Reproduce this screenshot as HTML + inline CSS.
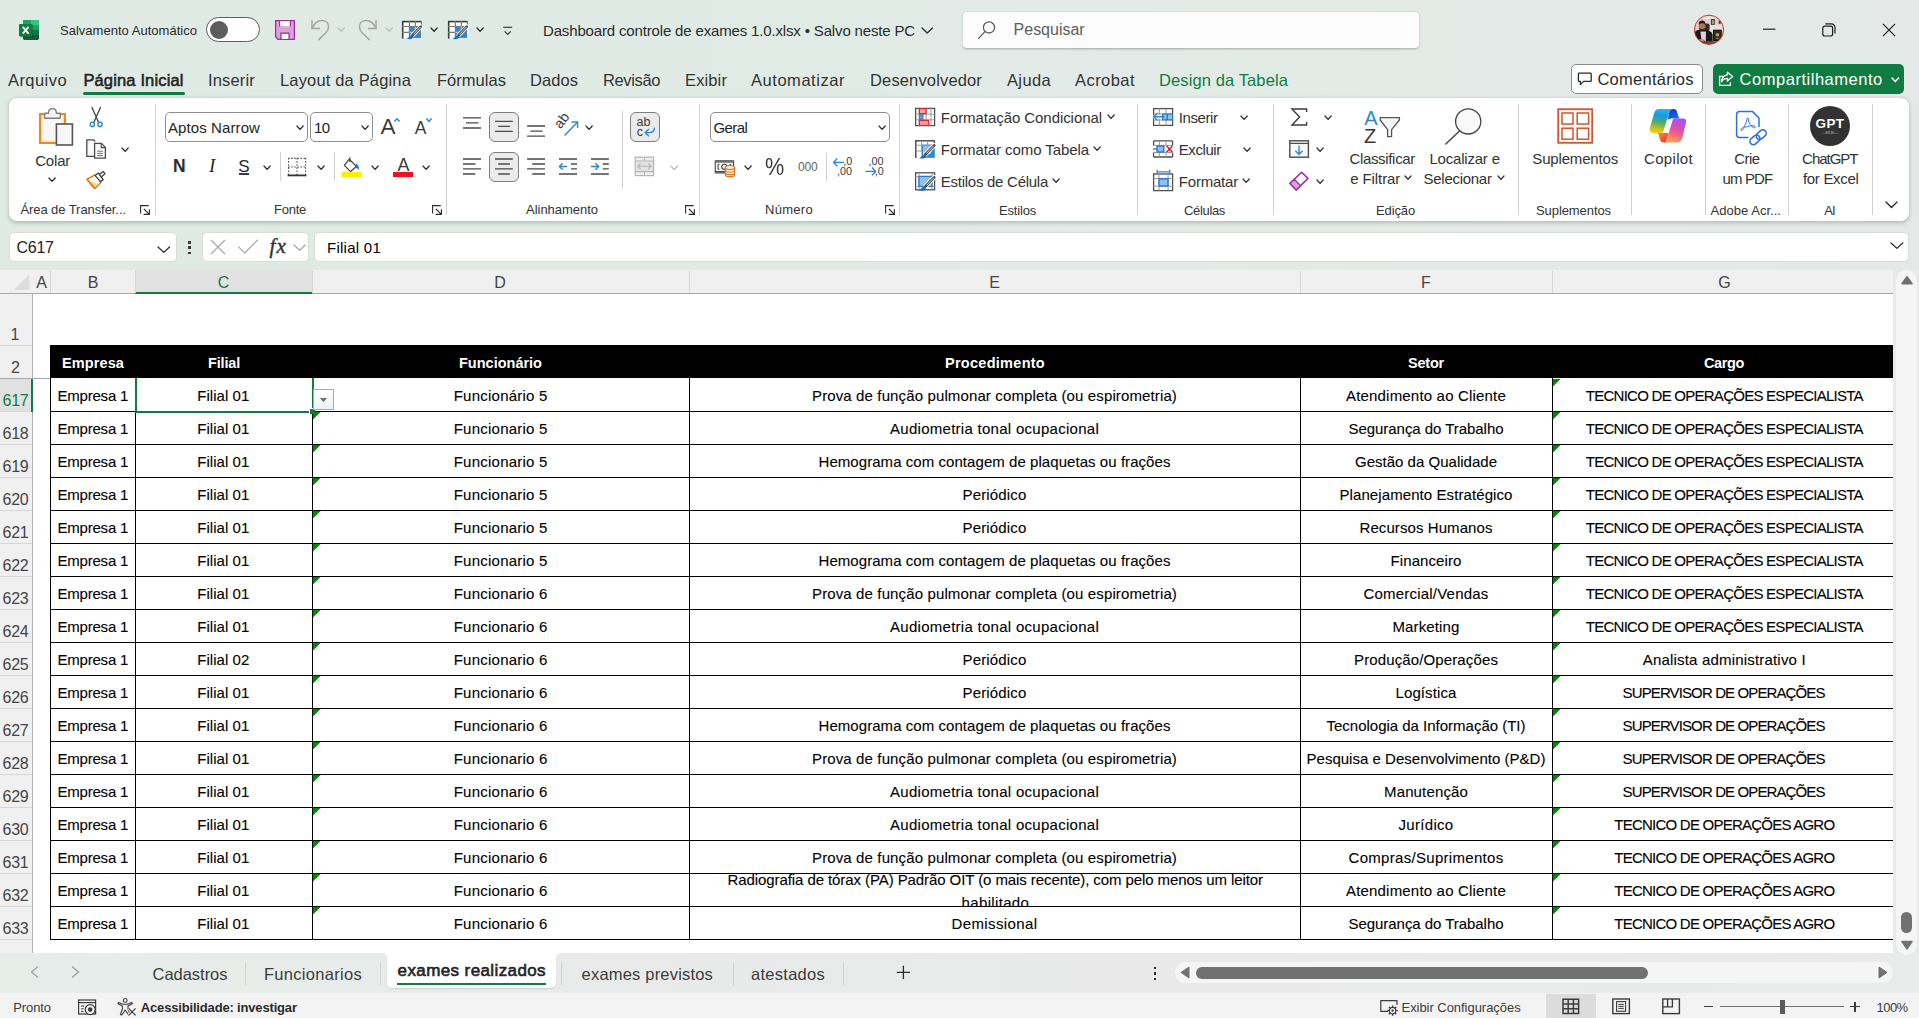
<!DOCTYPE html>
<html lang="pt-BR"><head><meta charset="utf-8"><title>Dashboard controle de exames 1.0.xlsx - Excel</title>
<style>
*{box-sizing:border-box;margin:0;padding:0}
html,body{width:1919px;height:1018px;overflow:hidden;background:#e5ebe8}
body{font-family:"Liberation Sans",sans-serif;color:#242424}
#app{position:relative;width:1919px;height:1018px;overflow:hidden;background:#e5ebe8}
.b{position:absolute;display:block}
.t{position:absolute;white-space:nowrap;display:block}

</style></head>
<body>
<div id="app">
<div class="b" style="left:0px;top:0px;width:1919px;height:270px;background:linear-gradient(90deg,#dfeae4 0%,#e1ebe6 45%,#e4e9e7 100%)"></div>
<div class="b" style="left:8.8px;top:97.8px;width:1900.3px;height:123.4px;background:#fff;border-radius:8px;box-shadow:0 1.5px 4px rgba(0,0,0,.20),0 0 1px rgba(0,0,0,.15)"></div>
<div class="b" style="left:0px;top:270px;width:1893px;height:683px;background:#fff"></div>
<div class="b" style="left:0px;top:270px;width:1893px;height:23px;background:#f0f0f0"></div>
<div class="b" style="left:0px;top:293px;width:1893px;height:1px;background:#a8a8a8"></div>
<div class="b" style="left:0px;top:294px;width:32px;height:659px;background:#f0f0f0"></div>
<div class="b" style="left:32px;top:294px;width:1px;height:659px;background:#b0b0b0"></div>
<div class="b" style="left:0px;top:953px;width:1919px;height:40px;background:linear-gradient(90deg,#e6ede9 0%,#e8ebe9 25%,#e9e9e9 60%,#e8ebea 100%)"></div>
<div class="b" style="left:0px;top:993px;width:1919px;height:25px;background:#f3f3f3"></div>
<div class="b" style="left:1893px;top:270px;width:26px;height:683px;background:#e6eae8"></div>
<span class="t" style="left:60.00px;top:22.0px;height:17px;line-height:17px;font-size:13px;color:#2b2b2b;letter-spacing:0.020px;">Salvamento Automático</span>
<span class="t" style="left:543.00px;top:21.0px;height:20px;line-height:20px;font-size:15px;color:#2b2b2b;letter-spacing:-0.156px;">Dashboard controle de exames 1.0.xlsx • Salvo neste PC</span>
<div class="b" style="left:962px;top:11px;width:458px;height:38px;background:#fbfcfb;border:1px solid #d9dddb;border-bottom-color:#b4b8b6;border-radius:5px;box-shadow:0 1px 1.5px rgba(0,0,0,.12)"></div>
<span class="t" style="left:1013.60px;top:19.0px;height:21px;line-height:21px;font-size:16px;color:#5e5e5e;letter-spacing:-0.017px;">Pesquisar</span>
<span class="t" style="left:8.00px;top:70.0px;height:21px;line-height:21px;font-size:16.5px;color:#333;letter-spacing:0.436px;">Arquivo</span>
<span class="t" style="left:208.00px;top:70.0px;height:21px;line-height:21px;font-size:16.5px;color:#333;letter-spacing:0.165px;">Inserir</span>
<span class="t" style="left:280.00px;top:70.0px;height:21px;line-height:21px;font-size:16.5px;color:#333;letter-spacing:0.160px;">Layout da Página</span>
<span class="t" style="left:437.00px;top:70.0px;height:21px;line-height:21px;font-size:16.5px;color:#333;letter-spacing:0.029px;">Fórmulas</span>
<span class="t" style="left:530.00px;top:70.0px;height:21px;line-height:21px;font-size:16.5px;color:#333;letter-spacing:0.061px;">Dados</span>
<span class="t" style="left:603.00px;top:70.0px;height:21px;line-height:21px;font-size:16.5px;color:#333;letter-spacing:-0.373px;">Revisão</span>
<span class="t" style="left:685.00px;top:70.0px;height:21px;line-height:21px;font-size:16.5px;color:#333;letter-spacing:0.124px;">Exibir</span>
<span class="t" style="left:751.00px;top:70.0px;height:21px;line-height:21px;font-size:16.5px;color:#333;letter-spacing:0.542px;">Automatizar</span>
<span class="t" style="left:870.00px;top:70.0px;height:21px;line-height:21px;font-size:16.5px;color:#333;letter-spacing:0.149px;">Desenvolvedor</span>
<span class="t" style="left:1007.00px;top:70.0px;height:21px;line-height:21px;font-size:16.5px;color:#333;letter-spacing:0.360px;">Ajuda</span>
<span class="t" style="left:1075.00px;top:70.0px;height:21px;line-height:21px;font-size:16.5px;color:#333;letter-spacing:0.448px;">Acrobat</span>
<span class="t" style="left:83.40px;top:70.0px;height:21px;line-height:21px;font-size:16.5px;color:#242424;letter-spacing:0.147px;-webkit-text-stroke:0.55px #242424;">Página Inicial</span>
<div class="b" style="left:83px;top:92px;width:102px;height:3px;background:#107c41;border-radius:2px"></div>
<span class="t" style="left:1159.00px;top:70.0px;height:21px;line-height:21px;font-size:16.5px;color:#107c41;letter-spacing:0.112px;">Design da Tabela</span>
<div class="b" style="left:1571px;top:64px;width:132px;height:30px;background:#fff;border:1px solid #8a8a8a;border-radius:5px"></div>
<span class="t" style="left:1597.40px;top:69.0px;height:21px;line-height:21px;font-size:16.5px;color:#2b2b2b;letter-spacing:0.260px;">Comentários</span>
<div class="b" style="left:1713px;top:64px;width:191px;height:30px;background:#107c41;border-radius:5px"></div>
<span class="t" style="left:1739.60px;top:69.0px;height:21px;line-height:21px;font-size:16.5px;color:#fff;letter-spacing:0.524px;">Compartilhamento</span>
<span class="t" style="left:35.20px;top:151.0px;height:20px;line-height:20px;font-size:15px;color:#333;letter-spacing:-0.169px;">Colar</span>
<span class="t" style="left:20.40px;top:201.0px;height:17px;line-height:17px;font-size:13px;color:#333;letter-spacing:-0.071px;">Área de Transfer...</span>
<span class="t" style="left:274.00px;top:201.0px;height:17px;line-height:17px;font-size:13px;color:#333;letter-spacing:-0.249px;">Fonte</span>
<span class="t" style="left:526.00px;top:201.0px;height:17px;line-height:17px;font-size:13px;color:#333;letter-spacing:-0.024px;">Alinhamento</span>
<span class="t" style="left:765.00px;top:201.0px;height:17px;line-height:17px;font-size:13px;color:#333;letter-spacing:0.294px;">Número</span>
<span class="t" style="left:940.80px;top:108.0px;height:20px;line-height:20px;font-size:15px;color:#333;letter-spacing:-0.063px;">Formatação Condicional</span>
<span class="t" style="left:940.80px;top:140.0px;height:20px;line-height:20px;font-size:15px;color:#333;letter-spacing:-0.079px;">Formatar como Tabela</span>
<span class="t" style="left:940.80px;top:172.0px;height:20px;line-height:20px;font-size:15px;color:#333;letter-spacing:-0.266px;">Estilos de Célula</span>
<span class="t" style="left:999.00px;top:202.0px;height:17px;line-height:17px;font-size:13px;color:#333;letter-spacing:-0.184px;">Estilos</span>
<span class="t" style="left:1178.80px;top:108.0px;height:20px;line-height:20px;font-size:15px;color:#333;letter-spacing:-0.411px;">Inserir</span>
<span class="t" style="left:1178.80px;top:140.0px;height:20px;line-height:20px;font-size:15px;color:#333;letter-spacing:-0.430px;">Excluir</span>
<span class="t" style="left:1178.80px;top:172.0px;height:20px;line-height:20px;font-size:15px;color:#333;letter-spacing:-0.205px;">Formatar</span>
<span class="t" style="left:1184.00px;top:202.0px;height:17px;line-height:17px;font-size:13px;color:#333;letter-spacing:-0.336px;">Células</span>
<span class="t" style="left:1349.40px;top:149.0px;height:20px;line-height:20px;font-size:15px;color:#333;letter-spacing:-0.325px;">Classificar</span>
<span class="t" style="left:1350.20px;top:169.0px;height:20px;line-height:20px;font-size:15px;color:#333;letter-spacing:-0.093px;">e Filtrar</span>
<span class="t" style="left:1429.40px;top:149.0px;height:20px;line-height:20px;font-size:15px;color:#333;letter-spacing:-0.195px;">Localizar e</span>
<span class="t" style="left:1423.60px;top:169.0px;height:20px;line-height:20px;font-size:15px;color:#333;letter-spacing:-0.288px;">Selecionar</span>
<span class="t" style="left:1376.00px;top:202.0px;height:17px;line-height:17px;font-size:13px;color:#333;letter-spacing:-0.125px;">Edição</span>
<span class="t" style="left:1532.30px;top:149.0px;height:20px;line-height:20px;font-size:15px;color:#333;letter-spacing:-0.169px;">Suplementos</span>
<span class="t" style="left:1536.00px;top:202.0px;height:17px;line-height:17px;font-size:13px;color:#333;letter-spacing:-0.080px;">Suplementos</span>
<span class="t" style="left:1644.00px;top:149.0px;height:20px;line-height:20px;font-size:15px;color:#333;letter-spacing:0.330px;">Copilot</span>
<span class="t" style="left:1734.20px;top:149.0px;height:20px;line-height:20px;font-size:15px;color:#333;letter-spacing:-0.551px;">Crie</span>
<span class="t" style="left:1722.60px;top:169.0px;height:20px;line-height:20px;font-size:15px;color:#333;letter-spacing:-0.884px;">um PDF</span>
<span class="t" style="left:1710.60px;top:202.0px;height:17px;line-height:17px;font-size:13px;color:#333;letter-spacing:0.025px;">Adobe Acr...</span>
<span class="t" style="left:1802.10px;top:149.0px;height:20px;line-height:20px;font-size:15px;color:#333;letter-spacing:-1.031px;">ChatGPT</span>
<span class="t" style="left:1802.90px;top:169.0px;height:20px;line-height:20px;font-size:15px;color:#333;letter-spacing:-0.295px;">for Excel</span>
<span class="t" style="left:1824.30px;top:202.0px;height:17px;line-height:17px;font-size:13px;color:#333;letter-spacing:-1.041px;">AI</span>
<div class="b" style="left:9px;top:232px;width:168px;height:30px;background:#fff;border:1px solid #d9dedb;border-radius:5px"></div>
<span class="t" style="left:16.60px;top:237.0px;height:21px;line-height:21px;font-size:16px;color:#242424;letter-spacing:-0.313px;">C617</span>
<div class="b" style="left:202px;top:232px;width:107px;height:30px;background:#fff;border:1px solid #d9dedb;border-radius:5px"></div>
<div class="b" style="left:314px;top:232px;width:1595px;height:30px;background:#fff;border:1px solid #d9dedb;border-radius:5px"></div>
<span class="t" style="left:327.00px;top:238.0px;height:20px;line-height:20px;font-size:15px;color:#000;letter-spacing:0.257px;">Filial 01</span>
<div class="b" style="left:135px;top:270px;width:177px;height:23px;background:#e1e1e1"></div>
<div class="b" style="left:135px;top:292px;width:177px;height:2px;background:#107c41"></div>
<div class="b" style="left:50px;top:271px;width:1px;height:22px;background:#d6d6d6"></div>
<div class="b" style="left:135px;top:271px;width:1px;height:22px;background:#d6d6d6"></div>
<div class="b" style="left:312px;top:271px;width:1px;height:22px;background:#d6d6d6"></div>
<div class="b" style="left:689px;top:271px;width:1px;height:22px;background:#d6d6d6"></div>
<div class="b" style="left:1300px;top:271px;width:1px;height:22px;background:#d6d6d6"></div>
<div class="b" style="left:1552px;top:271px;width:1px;height:22px;background:#d6d6d6"></div>
<span class="t" style="left:36.16px;top:272.0px;height:21px;line-height:21px;font-size:16px;color:#444;">A</span>
<span class="t" style="left:87.66px;top:272.0px;height:21px;line-height:21px;font-size:16px;color:#444;">B</span>
<span class="t" style="left:217.72px;top:272.0px;height:21px;line-height:21px;font-size:16px;color:#107c41;">C</span>
<span class="t" style="left:494.22px;top:272.0px;height:21px;line-height:21px;font-size:16px;color:#444;">D</span>
<span class="t" style="left:989.16px;top:272.0px;height:21px;line-height:21px;font-size:16px;color:#444;">E</span>
<span class="t" style="left:1421.11px;top:272.0px;height:21px;line-height:21px;font-size:16px;color:#444;">F</span>
<span class="t" style="left:1718.28px;top:272.0px;height:21px;line-height:21px;font-size:16px;color:#444;">G</span>
<svg class="b" style="left:12px;top:273px;" width="20" height="18" viewBox="0 0 20 18" fill="none"><path d="M17.4 1.4V17H1.8Z" fill="#dcdcdc"/></svg>
<div class="b" style="left:0px;top:345px;width:32px;height:1px;background:#d6d6d6"></div>
<span class="t" style="left:10.55px;top:324.0px;height:21px;line-height:21px;font-size:16px;color:#444;">1</span>
<span class="t" style="left:11.05px;top:357.0px;height:21px;line-height:21px;font-size:16px;color:#444;">2</span>
<div class="b" style="left:0px;top:379px;width:31px;height:32px;background:#e1e1e1"></div>
<span class="t" style="left:2.50px;top:390.0px;height:21px;line-height:21px;font-size:16px;color:#107c41;letter-spacing:-0.232px;">617</span>
<span class="t" style="left:2.50px;top:423.0px;height:21px;line-height:21px;font-size:16px;color:#444;letter-spacing:-0.232px;">618</span>
<div class="b" style="left:0px;top:411px;width:32px;height:1px;background:#d6d6d6"></div>
<span class="t" style="left:2.50px;top:456.0px;height:21px;line-height:21px;font-size:16px;color:#444;letter-spacing:-0.232px;">619</span>
<div class="b" style="left:0px;top:444px;width:32px;height:1px;background:#d6d6d6"></div>
<span class="t" style="left:2.50px;top:489.0px;height:21px;line-height:21px;font-size:16px;color:#444;letter-spacing:-0.232px;">620</span>
<div class="b" style="left:0px;top:477px;width:32px;height:1px;background:#d6d6d6"></div>
<span class="t" style="left:2.50px;top:522.0px;height:21px;line-height:21px;font-size:16px;color:#444;letter-spacing:-0.232px;">621</span>
<div class="b" style="left:0px;top:510px;width:32px;height:1px;background:#d6d6d6"></div>
<span class="t" style="left:2.50px;top:555.0px;height:21px;line-height:21px;font-size:16px;color:#444;letter-spacing:-0.232px;">622</span>
<div class="b" style="left:0px;top:543px;width:32px;height:1px;background:#d6d6d6"></div>
<span class="t" style="left:2.50px;top:588.0px;height:21px;line-height:21px;font-size:16px;color:#444;letter-spacing:-0.232px;">623</span>
<div class="b" style="left:0px;top:576px;width:32px;height:1px;background:#d6d6d6"></div>
<span class="t" style="left:2.50px;top:621.0px;height:21px;line-height:21px;font-size:16px;color:#444;letter-spacing:-0.232px;">624</span>
<div class="b" style="left:0px;top:609px;width:32px;height:1px;background:#d6d6d6"></div>
<span class="t" style="left:2.50px;top:654.0px;height:21px;line-height:21px;font-size:16px;color:#444;letter-spacing:-0.232px;">625</span>
<div class="b" style="left:0px;top:642px;width:32px;height:1px;background:#d6d6d6"></div>
<span class="t" style="left:2.50px;top:687.0px;height:21px;line-height:21px;font-size:16px;color:#444;letter-spacing:-0.232px;">626</span>
<div class="b" style="left:0px;top:675px;width:32px;height:1px;background:#d6d6d6"></div>
<span class="t" style="left:2.50px;top:720.0px;height:21px;line-height:21px;font-size:16px;color:#444;letter-spacing:-0.232px;">627</span>
<div class="b" style="left:0px;top:708px;width:32px;height:1px;background:#d6d6d6"></div>
<span class="t" style="left:2.50px;top:753.0px;height:21px;line-height:21px;font-size:16px;color:#444;letter-spacing:-0.232px;">628</span>
<div class="b" style="left:0px;top:741px;width:32px;height:1px;background:#d6d6d6"></div>
<span class="t" style="left:2.50px;top:786.0px;height:21px;line-height:21px;font-size:16px;color:#444;letter-spacing:-0.232px;">629</span>
<div class="b" style="left:0px;top:774px;width:32px;height:1px;background:#d6d6d6"></div>
<span class="t" style="left:2.50px;top:819.0px;height:21px;line-height:21px;font-size:16px;color:#444;letter-spacing:-0.232px;">630</span>
<div class="b" style="left:0px;top:807px;width:32px;height:1px;background:#d6d6d6"></div>
<span class="t" style="left:2.50px;top:852.0px;height:21px;line-height:21px;font-size:16px;color:#444;letter-spacing:-0.232px;">631</span>
<div class="b" style="left:0px;top:840px;width:32px;height:1px;background:#d6d6d6"></div>
<span class="t" style="left:2.50px;top:885.0px;height:21px;line-height:21px;font-size:16px;color:#444;letter-spacing:-0.232px;">632</span>
<div class="b" style="left:0px;top:873px;width:32px;height:1px;background:#d6d6d6"></div>
<span class="t" style="left:2.50px;top:918.0px;height:21px;line-height:21px;font-size:16px;color:#444;letter-spacing:-0.232px;">633</span>
<div class="b" style="left:0px;top:906px;width:32px;height:1px;background:#d6d6d6"></div>
<div class="b" style="left:0px;top:939px;width:32px;height:1px;background:#d6d6d6"></div>
<div class="b" style="left:0px;top:378px;width:50px;height:1px;background:#a8a8a8"></div>
<div class="b" style="left:31px;top:379px;width:2px;height:33px;background:#107c41"></div>
<div class="b" style="left:50px;top:345px;width:1843px;height:33px;background:#000"></div>
<span class="t" style="left:62.00px;top:354.0px;height:19px;line-height:19px;font-size:14.5px;color:#fff;font-weight:700;letter-spacing:0.106px;">Empresa</span>
<span class="t" style="left:208.00px;top:354.0px;height:19px;line-height:19px;font-size:14.5px;color:#fff;font-weight:700;letter-spacing:-0.173px;">Filial</span>
<span class="t" style="left:459.00px;top:354.0px;height:19px;line-height:19px;font-size:14.5px;color:#fff;font-weight:700;">Funcionário</span>
<span class="t" style="left:945.00px;top:354.0px;height:19px;line-height:19px;font-size:14.5px;color:#fff;font-weight:700;letter-spacing:0.276px;">Procedimento</span>
<span class="t" style="left:1408.00px;top:354.0px;height:19px;line-height:19px;font-size:14.5px;color:#fff;font-weight:700;letter-spacing:-0.213px;">Setor</span>
<span class="t" style="left:1704.00px;top:354.0px;height:19px;line-height:19px;font-size:14.5px;color:#fff;font-weight:700;letter-spacing:-0.379px;">Cargo</span>
<div class="b" style="left:50px;top:411px;width:1843px;height:1px;background:#000"></div>
<div class="b" style="left:50px;top:444px;width:1843px;height:1px;background:#000"></div>
<div class="b" style="left:50px;top:477px;width:1843px;height:1px;background:#000"></div>
<div class="b" style="left:50px;top:510px;width:1843px;height:1px;background:#000"></div>
<div class="b" style="left:50px;top:543px;width:1843px;height:1px;background:#000"></div>
<div class="b" style="left:50px;top:576px;width:1843px;height:1px;background:#000"></div>
<div class="b" style="left:50px;top:609px;width:1843px;height:1px;background:#000"></div>
<div class="b" style="left:50px;top:642px;width:1843px;height:1px;background:#000"></div>
<div class="b" style="left:50px;top:675px;width:1843px;height:1px;background:#000"></div>
<div class="b" style="left:50px;top:708px;width:1843px;height:1px;background:#000"></div>
<div class="b" style="left:50px;top:741px;width:1843px;height:1px;background:#000"></div>
<div class="b" style="left:50px;top:774px;width:1843px;height:1px;background:#000"></div>
<div class="b" style="left:50px;top:807px;width:1843px;height:1px;background:#000"></div>
<div class="b" style="left:50px;top:840px;width:1843px;height:1px;background:#000"></div>
<div class="b" style="left:50px;top:873px;width:1843px;height:1px;background:#000"></div>
<div class="b" style="left:50px;top:906px;width:1843px;height:1px;background:#000"></div>
<div class="b" style="left:50px;top:939px;width:1843px;height:1px;background:#000"></div>
<div class="b" style="left:50px;top:378px;width:1px;height:562px;background:#000"></div>
<div class="b" style="left:135px;top:378px;width:1px;height:562px;background:#000"></div>
<div class="b" style="left:312px;top:378px;width:1px;height:562px;background:#000"></div>
<div class="b" style="left:689px;top:378px;width:1px;height:562px;background:#000"></div>
<div class="b" style="left:1300px;top:378px;width:1px;height:562px;background:#000"></div>
<div class="b" style="left:1552px;top:378px;width:1px;height:562px;background:#000"></div>
<span class="t" style="left:57.50px;top:386.0px;height:20px;line-height:20px;font-size:15px;color:#000;letter-spacing:-0.215px;-webkit-text-stroke:0.1px #000;">Empresa 1</span>
<span class="t" style="left:197.30px;top:386.0px;height:20px;line-height:20px;font-size:15px;color:#000;letter-spacing:0.035px;-webkit-text-stroke:0.1px #000;">Filial 01</span>
<span class="t" style="left:453.70px;top:386.0px;height:20px;line-height:20px;font-size:15px;color:#000;letter-spacing:0.239px;-webkit-text-stroke:0.1px #000;">Funcionário 5</span>
<span class="t" style="left:812.00px;top:386.0px;height:20px;line-height:20px;font-size:15px;color:#000;letter-spacing:0.127px;-webkit-text-stroke:0.1px #000;">Prova de função pulmonar completa (ou espirometria)</span>
<span class="t" style="left:1346.00px;top:386.0px;height:20px;line-height:20px;font-size:15px;color:#000;letter-spacing:0.185px;-webkit-text-stroke:0.1px #000;">Atendimento ao Cliente</span>
<span class="t" style="left:1585.80px;top:386.0px;height:20px;line-height:20px;font-size:15px;color:#000;letter-spacing:-0.741px;-webkit-text-stroke:0.1px #000;">TECNICO DE OPERAÇÕES ESPECIALISTA</span>
<span class="t" style="left:57.50px;top:419.0px;height:20px;line-height:20px;font-size:15px;color:#000;letter-spacing:-0.215px;-webkit-text-stroke:0.1px #000;">Empresa 1</span>
<span class="t" style="left:197.30px;top:419.0px;height:20px;line-height:20px;font-size:15px;color:#000;letter-spacing:0.035px;-webkit-text-stroke:0.1px #000;">Filial 01</span>
<span class="t" style="left:453.70px;top:419.0px;height:20px;line-height:20px;font-size:15px;color:#000;letter-spacing:0.239px;-webkit-text-stroke:0.1px #000;">Funcionario 5</span>
<span class="t" style="left:890.00px;top:419.0px;height:20px;line-height:20px;font-size:15px;color:#000;letter-spacing:0.277px;-webkit-text-stroke:0.1px #000;">Audiometria tonal ocupacional</span>
<span class="t" style="left:1348.50px;top:419.0px;height:20px;line-height:20px;font-size:15px;color:#000;letter-spacing:-0.045px;-webkit-text-stroke:0.1px #000;">Segurança do Trabalho</span>
<span class="t" style="left:1585.80px;top:419.0px;height:20px;line-height:20px;font-size:15px;color:#000;letter-spacing:-0.741px;-webkit-text-stroke:0.1px #000;">TECNICO DE OPERAÇÕES ESPECIALISTA</span>
<span class="t" style="left:57.50px;top:452.0px;height:20px;line-height:20px;font-size:15px;color:#000;letter-spacing:-0.215px;-webkit-text-stroke:0.1px #000;">Empresa 1</span>
<span class="t" style="left:197.30px;top:452.0px;height:20px;line-height:20px;font-size:15px;color:#000;letter-spacing:0.035px;-webkit-text-stroke:0.1px #000;">Filial 01</span>
<span class="t" style="left:453.70px;top:452.0px;height:20px;line-height:20px;font-size:15px;color:#000;letter-spacing:0.239px;-webkit-text-stroke:0.1px #000;">Funcionario 5</span>
<span class="t" style="left:818.50px;top:452.0px;height:20px;line-height:20px;font-size:15px;color:#000;letter-spacing:0.057px;-webkit-text-stroke:0.1px #000;">Hemograma com contagem de plaquetas ou frações</span>
<span class="t" style="left:1355.00px;top:452.0px;height:20px;line-height:20px;font-size:15px;color:#000;letter-spacing:0.012px;-webkit-text-stroke:0.1px #000;">Gestão da Qualidade</span>
<span class="t" style="left:1585.80px;top:452.0px;height:20px;line-height:20px;font-size:15px;color:#000;letter-spacing:-0.741px;-webkit-text-stroke:0.1px #000;">TECNICO DE OPERAÇÕES ESPECIALISTA</span>
<span class="t" style="left:57.50px;top:485.0px;height:20px;line-height:20px;font-size:15px;color:#000;letter-spacing:-0.215px;-webkit-text-stroke:0.1px #000;">Empresa 1</span>
<span class="t" style="left:197.30px;top:485.0px;height:20px;line-height:20px;font-size:15px;color:#000;letter-spacing:0.035px;-webkit-text-stroke:0.1px #000;">Filial 01</span>
<span class="t" style="left:453.70px;top:485.0px;height:20px;line-height:20px;font-size:15px;color:#000;letter-spacing:0.239px;-webkit-text-stroke:0.1px #000;">Funcionario 5</span>
<span class="t" style="left:962.50px;top:485.0px;height:20px;line-height:20px;font-size:15px;color:#000;letter-spacing:0.163px;-webkit-text-stroke:0.1px #000;">Periódico</span>
<span class="t" style="left:1339.50px;top:485.0px;height:20px;line-height:20px;font-size:15px;color:#000;letter-spacing:0.086px;-webkit-text-stroke:0.1px #000;">Planejamento Estratégico</span>
<span class="t" style="left:1585.80px;top:485.0px;height:20px;line-height:20px;font-size:15px;color:#000;letter-spacing:-0.741px;-webkit-text-stroke:0.1px #000;">TECNICO DE OPERAÇÕES ESPECIALISTA</span>
<span class="t" style="left:57.50px;top:518.0px;height:20px;line-height:20px;font-size:15px;color:#000;letter-spacing:-0.215px;-webkit-text-stroke:0.1px #000;">Empresa 1</span>
<span class="t" style="left:197.30px;top:518.0px;height:20px;line-height:20px;font-size:15px;color:#000;letter-spacing:0.035px;-webkit-text-stroke:0.1px #000;">Filial 01</span>
<span class="t" style="left:453.70px;top:518.0px;height:20px;line-height:20px;font-size:15px;color:#000;letter-spacing:0.239px;-webkit-text-stroke:0.1px #000;">Funcionario 5</span>
<span class="t" style="left:962.50px;top:518.0px;height:20px;line-height:20px;font-size:15px;color:#000;letter-spacing:0.163px;-webkit-text-stroke:0.1px #000;">Periódico</span>
<span class="t" style="left:1359.50px;top:518.0px;height:20px;line-height:20px;font-size:15px;color:#000;letter-spacing:0.080px;-webkit-text-stroke:0.1px #000;">Recursos Humanos</span>
<span class="t" style="left:1585.80px;top:518.0px;height:20px;line-height:20px;font-size:15px;color:#000;letter-spacing:-0.741px;-webkit-text-stroke:0.1px #000;">TECNICO DE OPERAÇÕES ESPECIALISTA</span>
<span class="t" style="left:57.50px;top:551.0px;height:20px;line-height:20px;font-size:15px;color:#000;letter-spacing:-0.215px;-webkit-text-stroke:0.1px #000;">Empresa 1</span>
<span class="t" style="left:197.30px;top:551.0px;height:20px;line-height:20px;font-size:15px;color:#000;letter-spacing:0.035px;-webkit-text-stroke:0.1px #000;">Filial 01</span>
<span class="t" style="left:453.70px;top:551.0px;height:20px;line-height:20px;font-size:15px;color:#000;letter-spacing:0.239px;-webkit-text-stroke:0.1px #000;">Funcionario 5</span>
<span class="t" style="left:818.50px;top:551.0px;height:20px;line-height:20px;font-size:15px;color:#000;letter-spacing:0.057px;-webkit-text-stroke:0.1px #000;">Hemograma com contagem de plaquetas ou frações</span>
<span class="t" style="left:1390.50px;top:551.0px;height:20px;line-height:20px;font-size:15px;color:#000;letter-spacing:0.097px;-webkit-text-stroke:0.1px #000;">Financeiro</span>
<span class="t" style="left:1585.80px;top:551.0px;height:20px;line-height:20px;font-size:15px;color:#000;letter-spacing:-0.741px;-webkit-text-stroke:0.1px #000;">TECNICO DE OPERAÇÕES ESPECIALISTA</span>
<span class="t" style="left:57.50px;top:584.0px;height:20px;line-height:20px;font-size:15px;color:#000;letter-spacing:-0.215px;-webkit-text-stroke:0.1px #000;">Empresa 1</span>
<span class="t" style="left:197.30px;top:584.0px;height:20px;line-height:20px;font-size:15px;color:#000;letter-spacing:0.035px;-webkit-text-stroke:0.1px #000;">Filial 01</span>
<span class="t" style="left:453.70px;top:584.0px;height:20px;line-height:20px;font-size:15px;color:#000;letter-spacing:0.239px;-webkit-text-stroke:0.1px #000;">Funcionario 6</span>
<span class="t" style="left:812.00px;top:584.0px;height:20px;line-height:20px;font-size:15px;color:#000;letter-spacing:0.127px;-webkit-text-stroke:0.1px #000;">Prova de função pulmonar completa (ou espirometria)</span>
<span class="t" style="left:1363.50px;top:584.0px;height:20px;line-height:20px;font-size:15px;color:#000;letter-spacing:0.204px;-webkit-text-stroke:0.1px #000;">Comercial/Vendas</span>
<span class="t" style="left:1585.80px;top:584.0px;height:20px;line-height:20px;font-size:15px;color:#000;letter-spacing:-0.741px;-webkit-text-stroke:0.1px #000;">TECNICO DE OPERAÇÕES ESPECIALISTA</span>
<span class="t" style="left:57.50px;top:617.0px;height:20px;line-height:20px;font-size:15px;color:#000;letter-spacing:-0.215px;-webkit-text-stroke:0.1px #000;">Empresa 1</span>
<span class="t" style="left:197.30px;top:617.0px;height:20px;line-height:20px;font-size:15px;color:#000;letter-spacing:0.035px;-webkit-text-stroke:0.1px #000;">Filial 01</span>
<span class="t" style="left:453.70px;top:617.0px;height:20px;line-height:20px;font-size:15px;color:#000;letter-spacing:0.239px;-webkit-text-stroke:0.1px #000;">Funcionario 6</span>
<span class="t" style="left:890.00px;top:617.0px;height:20px;line-height:20px;font-size:15px;color:#000;letter-spacing:0.277px;-webkit-text-stroke:0.1px #000;">Audiometria tonal ocupacional</span>
<span class="t" style="left:1392.50px;top:617.0px;height:20px;line-height:20px;font-size:15px;color:#000;letter-spacing:0.127px;-webkit-text-stroke:0.1px #000;">Marketing</span>
<span class="t" style="left:1585.80px;top:617.0px;height:20px;line-height:20px;font-size:15px;color:#000;letter-spacing:-0.741px;-webkit-text-stroke:0.1px #000;">TECNICO DE OPERAÇÕES ESPECIALISTA</span>
<span class="t" style="left:57.50px;top:650.0px;height:20px;line-height:20px;font-size:15px;color:#000;letter-spacing:-0.215px;-webkit-text-stroke:0.1px #000;">Empresa 1</span>
<span class="t" style="left:197.30px;top:650.0px;height:20px;line-height:20px;font-size:15px;color:#000;letter-spacing:0.035px;-webkit-text-stroke:0.1px #000;">Filial 02</span>
<span class="t" style="left:453.70px;top:650.0px;height:20px;line-height:20px;font-size:15px;color:#000;letter-spacing:0.239px;-webkit-text-stroke:0.1px #000;">Funcionario 6</span>
<span class="t" style="left:962.50px;top:650.0px;height:20px;line-height:20px;font-size:15px;color:#000;letter-spacing:0.163px;-webkit-text-stroke:0.1px #000;">Periódico</span>
<span class="t" style="left:1354.00px;top:650.0px;height:20px;line-height:20px;font-size:15px;color:#000;letter-spacing:0.125px;-webkit-text-stroke:0.1px #000;">Produção/Operações</span>
<span class="t" style="left:1642.80px;top:650.0px;height:20px;line-height:20px;font-size:15px;color:#000;letter-spacing:0.184px;-webkit-text-stroke:0.1px #000;">Analista administrativo I</span>
<span class="t" style="left:57.50px;top:683.0px;height:20px;line-height:20px;font-size:15px;color:#000;letter-spacing:-0.215px;-webkit-text-stroke:0.1px #000;">Empresa 1</span>
<span class="t" style="left:197.30px;top:683.0px;height:20px;line-height:20px;font-size:15px;color:#000;letter-spacing:0.035px;-webkit-text-stroke:0.1px #000;">Filial 01</span>
<span class="t" style="left:453.70px;top:683.0px;height:20px;line-height:20px;font-size:15px;color:#000;letter-spacing:0.239px;-webkit-text-stroke:0.1px #000;">Funcionario 6</span>
<span class="t" style="left:962.50px;top:683.0px;height:20px;line-height:20px;font-size:15px;color:#000;letter-spacing:0.163px;-webkit-text-stroke:0.1px #000;">Periódico</span>
<span class="t" style="left:1395.50px;top:683.0px;height:20px;line-height:20px;font-size:15px;color:#000;letter-spacing:0.107px;-webkit-text-stroke:0.1px #000;">Logística</span>
<span class="t" style="left:1622.60px;top:683.0px;height:20px;line-height:20px;font-size:15px;color:#000;letter-spacing:-0.882px;-webkit-text-stroke:0.1px #000;">SUPERVISOR DE OPERAÇÕES</span>
<span class="t" style="left:57.50px;top:716.0px;height:20px;line-height:20px;font-size:15px;color:#000;letter-spacing:-0.215px;-webkit-text-stroke:0.1px #000;">Empresa 1</span>
<span class="t" style="left:197.30px;top:716.0px;height:20px;line-height:20px;font-size:15px;color:#000;letter-spacing:0.035px;-webkit-text-stroke:0.1px #000;">Filial 01</span>
<span class="t" style="left:453.70px;top:716.0px;height:20px;line-height:20px;font-size:15px;color:#000;letter-spacing:0.239px;-webkit-text-stroke:0.1px #000;">Funcionario 6</span>
<span class="t" style="left:818.50px;top:716.0px;height:20px;line-height:20px;font-size:15px;color:#000;letter-spacing:0.057px;-webkit-text-stroke:0.1px #000;">Hemograma com contagem de plaquetas ou frações</span>
<span class="t" style="left:1326.50px;top:716.0px;height:20px;line-height:20px;font-size:15px;color:#000;letter-spacing:-0.009px;-webkit-text-stroke:0.1px #000;">Tecnologia da Informação (TI)</span>
<span class="t" style="left:1622.60px;top:716.0px;height:20px;line-height:20px;font-size:15px;color:#000;letter-spacing:-0.882px;-webkit-text-stroke:0.1px #000;">SUPERVISOR DE OPERAÇÕES</span>
<span class="t" style="left:57.50px;top:749.0px;height:20px;line-height:20px;font-size:15px;color:#000;letter-spacing:-0.215px;-webkit-text-stroke:0.1px #000;">Empresa 1</span>
<span class="t" style="left:197.30px;top:749.0px;height:20px;line-height:20px;font-size:15px;color:#000;letter-spacing:0.035px;-webkit-text-stroke:0.1px #000;">Filial 01</span>
<span class="t" style="left:453.70px;top:749.0px;height:20px;line-height:20px;font-size:15px;color:#000;letter-spacing:0.239px;-webkit-text-stroke:0.1px #000;">Funcionario 6</span>
<span class="t" style="left:812.00px;top:749.0px;height:20px;line-height:20px;font-size:15px;color:#000;letter-spacing:0.127px;-webkit-text-stroke:0.1px #000;">Prova de função pulmonar completa (ou espirometria)</span>
<span class="t" style="left:1306.50px;top:749.0px;height:20px;line-height:20px;font-size:15px;color:#000;letter-spacing:0.017px;-webkit-text-stroke:0.1px #000;">Pesquisa e Desenvolvimento (P&amp;D)</span>
<span class="t" style="left:1622.60px;top:749.0px;height:20px;line-height:20px;font-size:15px;color:#000;letter-spacing:-0.882px;-webkit-text-stroke:0.1px #000;">SUPERVISOR DE OPERAÇÕES</span>
<span class="t" style="left:57.50px;top:782.0px;height:20px;line-height:20px;font-size:15px;color:#000;letter-spacing:-0.215px;-webkit-text-stroke:0.1px #000;">Empresa 1</span>
<span class="t" style="left:197.30px;top:782.0px;height:20px;line-height:20px;font-size:15px;color:#000;letter-spacing:0.035px;-webkit-text-stroke:0.1px #000;">Filial 01</span>
<span class="t" style="left:453.70px;top:782.0px;height:20px;line-height:20px;font-size:15px;color:#000;letter-spacing:0.239px;-webkit-text-stroke:0.1px #000;">Funcionario 6</span>
<span class="t" style="left:890.00px;top:782.0px;height:20px;line-height:20px;font-size:15px;color:#000;letter-spacing:0.277px;-webkit-text-stroke:0.1px #000;">Audiometria tonal ocupacional</span>
<span class="t" style="left:1384.00px;top:782.0px;height:20px;line-height:20px;font-size:15px;color:#000;letter-spacing:0.144px;-webkit-text-stroke:0.1px #000;">Manutenção</span>
<span class="t" style="left:1622.60px;top:782.0px;height:20px;line-height:20px;font-size:15px;color:#000;letter-spacing:-0.882px;-webkit-text-stroke:0.1px #000;">SUPERVISOR DE OPERAÇÕES</span>
<span class="t" style="left:57.50px;top:815.0px;height:20px;line-height:20px;font-size:15px;color:#000;letter-spacing:-0.215px;-webkit-text-stroke:0.1px #000;">Empresa 1</span>
<span class="t" style="left:197.30px;top:815.0px;height:20px;line-height:20px;font-size:15px;color:#000;letter-spacing:0.035px;-webkit-text-stroke:0.1px #000;">Filial 01</span>
<span class="t" style="left:453.70px;top:815.0px;height:20px;line-height:20px;font-size:15px;color:#000;letter-spacing:0.239px;-webkit-text-stroke:0.1px #000;">Funcionario 6</span>
<span class="t" style="left:890.00px;top:815.0px;height:20px;line-height:20px;font-size:15px;color:#000;letter-spacing:0.277px;-webkit-text-stroke:0.1px #000;">Audiometria tonal ocupacional</span>
<span class="t" style="left:1398.50px;top:815.0px;height:20px;line-height:20px;font-size:15px;color:#000;letter-spacing:0.310px;-webkit-text-stroke:0.1px #000;">Jurídico</span>
<span class="t" style="left:1614.30px;top:815.0px;height:20px;line-height:20px;font-size:15px;color:#000;letter-spacing:-0.768px;-webkit-text-stroke:0.1px #000;">TECNICO DE OPERAÇÕES AGRO</span>
<span class="t" style="left:57.50px;top:848.0px;height:20px;line-height:20px;font-size:15px;color:#000;letter-spacing:-0.215px;-webkit-text-stroke:0.1px #000;">Empresa 1</span>
<span class="t" style="left:197.30px;top:848.0px;height:20px;line-height:20px;font-size:15px;color:#000;letter-spacing:0.035px;-webkit-text-stroke:0.1px #000;">Filial 01</span>
<span class="t" style="left:453.70px;top:848.0px;height:20px;line-height:20px;font-size:15px;color:#000;letter-spacing:0.239px;-webkit-text-stroke:0.1px #000;">Funcionario 6</span>
<span class="t" style="left:812.00px;top:848.0px;height:20px;line-height:20px;font-size:15px;color:#000;letter-spacing:0.127px;-webkit-text-stroke:0.1px #000;">Prova de função pulmonar completa (ou espirometria)</span>
<span class="t" style="left:1348.50px;top:848.0px;height:20px;line-height:20px;font-size:15px;color:#000;letter-spacing:0.304px;-webkit-text-stroke:0.1px #000;">Compras/Suprimentos</span>
<span class="t" style="left:1614.30px;top:848.0px;height:20px;line-height:20px;font-size:15px;color:#000;letter-spacing:-0.768px;-webkit-text-stroke:0.1px #000;">TECNICO DE OPERAÇÕES AGRO</span>
<span class="t" style="left:57.50px;top:881.0px;height:20px;line-height:20px;font-size:15px;color:#000;letter-spacing:-0.215px;-webkit-text-stroke:0.1px #000;">Empresa 1</span>
<span class="t" style="left:197.30px;top:881.0px;height:20px;line-height:20px;font-size:15px;color:#000;letter-spacing:0.035px;-webkit-text-stroke:0.1px #000;">Filial 01</span>
<span class="t" style="left:453.70px;top:881.0px;height:20px;line-height:20px;font-size:15px;color:#000;letter-spacing:0.239px;-webkit-text-stroke:0.1px #000;">Funcionario 6</span>
<span class="t" style="left:1346.00px;top:881.0px;height:20px;line-height:20px;font-size:15px;color:#000;letter-spacing:0.185px;-webkit-text-stroke:0.1px #000;">Atendimento ao Cliente</span>
<span class="t" style="left:1614.30px;top:881.0px;height:20px;line-height:20px;font-size:15px;color:#000;letter-spacing:-0.768px;-webkit-text-stroke:0.1px #000;">TECNICO DE OPERAÇÕES AGRO</span>
<span class="t" style="left:57.50px;top:914.0px;height:20px;line-height:20px;font-size:15px;color:#000;letter-spacing:-0.215px;-webkit-text-stroke:0.1px #000;">Empresa 1</span>
<span class="t" style="left:197.30px;top:914.0px;height:20px;line-height:20px;font-size:15px;color:#000;letter-spacing:0.035px;-webkit-text-stroke:0.1px #000;">Filial 01</span>
<span class="t" style="left:453.70px;top:914.0px;height:20px;line-height:20px;font-size:15px;color:#000;letter-spacing:0.239px;-webkit-text-stroke:0.1px #000;">Funcionario 6</span>
<span class="t" style="left:951.50px;top:914.0px;height:20px;line-height:20px;font-size:15px;color:#000;letter-spacing:0.391px;-webkit-text-stroke:0.1px #000;">Demissional</span>
<span class="t" style="left:1348.50px;top:914.0px;height:20px;line-height:20px;font-size:15px;color:#000;letter-spacing:-0.045px;-webkit-text-stroke:0.1px #000;">Segurança do Trabalho</span>
<span class="t" style="left:1614.30px;top:914.0px;height:20px;line-height:20px;font-size:15px;color:#000;letter-spacing:-0.768px;-webkit-text-stroke:0.1px #000;">TECNICO DE OPERAÇÕES AGRO</span>
<div class="b" style="left:690px;top:874px;width:610px;height:32px;overflow:hidden">
<span class="t" style="left:37.60px;top:-4.0px;height:20px;line-height:20px;font-size:15px;color:#000;letter-spacing:-0.086px;-webkit-text-stroke:0.1px #000;">Radiografia de tórax (PA) Padrão OIT (o mais recente), com pelo menos um leitor</span>
<span class="t" style="left:271.60px;top:19.0px;height:20px;line-height:20px;font-size:15px;color:#000;letter-spacing:0.338px;-webkit-text-stroke:0.1px #000;">habilitado</span>
</div>
<svg class="b" style="left:1553px;top:379px;" width="8" height="8" viewBox="0 0 8 8" fill="none"><path d="M0 0H7.6L0 7.6Z" fill="#008a00"/></svg>
<svg class="b" style="left:313px;top:412px;" width="8" height="8" viewBox="0 0 8 8" fill="none"><path d="M0 0H7.6L0 7.6Z" fill="#008a00"/></svg>
<svg class="b" style="left:1553px;top:412px;" width="8" height="8" viewBox="0 0 8 8" fill="none"><path d="M0 0H7.6L0 7.6Z" fill="#008a00"/></svg>
<svg class="b" style="left:313px;top:445px;" width="8" height="8" viewBox="0 0 8 8" fill="none"><path d="M0 0H7.6L0 7.6Z" fill="#008a00"/></svg>
<svg class="b" style="left:1553px;top:445px;" width="8" height="8" viewBox="0 0 8 8" fill="none"><path d="M0 0H7.6L0 7.6Z" fill="#008a00"/></svg>
<svg class="b" style="left:313px;top:478px;" width="8" height="8" viewBox="0 0 8 8" fill="none"><path d="M0 0H7.6L0 7.6Z" fill="#008a00"/></svg>
<svg class="b" style="left:1553px;top:478px;" width="8" height="8" viewBox="0 0 8 8" fill="none"><path d="M0 0H7.6L0 7.6Z" fill="#008a00"/></svg>
<svg class="b" style="left:313px;top:511px;" width="8" height="8" viewBox="0 0 8 8" fill="none"><path d="M0 0H7.6L0 7.6Z" fill="#008a00"/></svg>
<svg class="b" style="left:1553px;top:511px;" width="8" height="8" viewBox="0 0 8 8" fill="none"><path d="M0 0H7.6L0 7.6Z" fill="#008a00"/></svg>
<svg class="b" style="left:313px;top:544px;" width="8" height="8" viewBox="0 0 8 8" fill="none"><path d="M0 0H7.6L0 7.6Z" fill="#008a00"/></svg>
<svg class="b" style="left:1553px;top:544px;" width="8" height="8" viewBox="0 0 8 8" fill="none"><path d="M0 0H7.6L0 7.6Z" fill="#008a00"/></svg>
<svg class="b" style="left:313px;top:577px;" width="8" height="8" viewBox="0 0 8 8" fill="none"><path d="M0 0H7.6L0 7.6Z" fill="#008a00"/></svg>
<svg class="b" style="left:1553px;top:577px;" width="8" height="8" viewBox="0 0 8 8" fill="none"><path d="M0 0H7.6L0 7.6Z" fill="#008a00"/></svg>
<svg class="b" style="left:313px;top:610px;" width="8" height="8" viewBox="0 0 8 8" fill="none"><path d="M0 0H7.6L0 7.6Z" fill="#008a00"/></svg>
<svg class="b" style="left:1553px;top:610px;" width="8" height="8" viewBox="0 0 8 8" fill="none"><path d="M0 0H7.6L0 7.6Z" fill="#008a00"/></svg>
<svg class="b" style="left:313px;top:643px;" width="8" height="8" viewBox="0 0 8 8" fill="none"><path d="M0 0H7.6L0 7.6Z" fill="#008a00"/></svg>
<svg class="b" style="left:1553px;top:643px;" width="8" height="8" viewBox="0 0 8 8" fill="none"><path d="M0 0H7.6L0 7.6Z" fill="#008a00"/></svg>
<svg class="b" style="left:313px;top:676px;" width="8" height="8" viewBox="0 0 8 8" fill="none"><path d="M0 0H7.6L0 7.6Z" fill="#008a00"/></svg>
<svg class="b" style="left:1553px;top:676px;" width="8" height="8" viewBox="0 0 8 8" fill="none"><path d="M0 0H7.6L0 7.6Z" fill="#008a00"/></svg>
<svg class="b" style="left:313px;top:709px;" width="8" height="8" viewBox="0 0 8 8" fill="none"><path d="M0 0H7.6L0 7.6Z" fill="#008a00"/></svg>
<svg class="b" style="left:1553px;top:709px;" width="8" height="8" viewBox="0 0 8 8" fill="none"><path d="M0 0H7.6L0 7.6Z" fill="#008a00"/></svg>
<svg class="b" style="left:313px;top:742px;" width="8" height="8" viewBox="0 0 8 8" fill="none"><path d="M0 0H7.6L0 7.6Z" fill="#008a00"/></svg>
<svg class="b" style="left:1553px;top:742px;" width="8" height="8" viewBox="0 0 8 8" fill="none"><path d="M0 0H7.6L0 7.6Z" fill="#008a00"/></svg>
<svg class="b" style="left:313px;top:775px;" width="8" height="8" viewBox="0 0 8 8" fill="none"><path d="M0 0H7.6L0 7.6Z" fill="#008a00"/></svg>
<svg class="b" style="left:1553px;top:775px;" width="8" height="8" viewBox="0 0 8 8" fill="none"><path d="M0 0H7.6L0 7.6Z" fill="#008a00"/></svg>
<svg class="b" style="left:313px;top:808px;" width="8" height="8" viewBox="0 0 8 8" fill="none"><path d="M0 0H7.6L0 7.6Z" fill="#008a00"/></svg>
<svg class="b" style="left:1553px;top:808px;" width="8" height="8" viewBox="0 0 8 8" fill="none"><path d="M0 0H7.6L0 7.6Z" fill="#008a00"/></svg>
<svg class="b" style="left:313px;top:841px;" width="8" height="8" viewBox="0 0 8 8" fill="none"><path d="M0 0H7.6L0 7.6Z" fill="#008a00"/></svg>
<svg class="b" style="left:1553px;top:841px;" width="8" height="8" viewBox="0 0 8 8" fill="none"><path d="M0 0H7.6L0 7.6Z" fill="#008a00"/></svg>
<svg class="b" style="left:313px;top:874px;" width="8" height="8" viewBox="0 0 8 8" fill="none"><path d="M0 0H7.6L0 7.6Z" fill="#008a00"/></svg>
<svg class="b" style="left:1553px;top:874px;" width="8" height="8" viewBox="0 0 8 8" fill="none"><path d="M0 0H7.6L0 7.6Z" fill="#008a00"/></svg>
<svg class="b" style="left:313px;top:907px;" width="8" height="8" viewBox="0 0 8 8" fill="none"><path d="M0 0H7.6L0 7.6Z" fill="#008a00"/></svg>
<svg class="b" style="left:1553px;top:907px;" width="8" height="8" viewBox="0 0 8 8" fill="none"><path d="M0 0H7.6L0 7.6Z" fill="#008a00"/></svg>
<div class="b" style="left:135px;top:378px;width:179px;height:35px;border:2px solid #107c41;border-top:0"></div>
<div class="b" style="left:309px;top:408px;width:6px;height:6px;background:#1e7145;border:1px solid #fff;border-right:0;border-bottom:0"></div>
<div class="b" style="left:313px;top:389px;width:21px;height:21px;background:linear-gradient(#fff,#eef0f6);border:1px solid #a4a9b4"></div>
<svg class="b" style="left:319px;top:397px;" width="9" height="6" viewBox="0 0 9 6" fill="none"><path d="M0.8 1H8.2L4.5 5Z" fill="#6e6e6e"/></svg>
<div class="b" style="left:387px;top:953px;width:169px;height:35px;background:#fff;border-radius:0 0 5px 5px;box-shadow:0 1px 1.5px rgba(0,0,0,.10)"></div>
<svg class="b" style="left:382px;top:953px;" width="5" height="5" viewBox="0 0 5 5" fill="none"><path d="M0 0H5V5A5 5 0 0 0 0 0Z" fill="#fff"/></svg>
<svg class="b" style="left:556px;top:953px;" width="5" height="5" viewBox="0 0 5 5" fill="none"><path d="M5 0H0V5A5 5 0 0 1 5 0Z" fill="#fff"/></svg>
<span class="t" style="left:152.50px;top:964.0px;height:21px;line-height:21px;font-size:16.5px;color:#3b3b3b;letter-spacing:-0.022px;">Cadastros</span>
<span class="t" style="left:264.00px;top:964.0px;height:21px;line-height:21px;font-size:16.5px;color:#3b3b3b;letter-spacing:0.295px;">Funcionarios</span>
<span class="t" style="left:581.60px;top:964.0px;height:21px;line-height:21px;font-size:16.5px;color:#3b3b3b;letter-spacing:0.189px;">exames previstos</span>
<span class="t" style="left:751.00px;top:964.0px;height:21px;line-height:21px;font-size:16.5px;color:#3b3b3b;letter-spacing:0.272px;">atestados</span>
<span class="t" style="left:397.60px;top:960.0px;height:22px;line-height:22px;font-size:17px;color:#242424;letter-spacing:0.392px;-webkit-text-stroke:0.6px #242424;">exames realizados</span>
<div class="b" style="left:397px;top:983px;width:149px;height:2px;background:#107c41"></div>
<div class="b" style="left:245px;top:961.5px;width:1px;height:23px;background:#cfd3d1"></div>
<div class="b" style="left:380px;top:961.5px;width:1px;height:23px;background:#cfd3d1"></div>
<div class="b" style="left:561px;top:961.5px;width:1px;height:23px;background:#cfd3d1"></div>
<div class="b" style="left:733px;top:961.5px;width:1px;height:23px;background:#cfd3d1"></div>
<div class="b" style="left:843px;top:961.5px;width:1px;height:23px;background:#cfd3d1"></div>
<span class="t" style="left:13.30px;top:999.0px;height:17px;line-height:17px;font-size:13px;color:#3b3b3b;letter-spacing:-0.100px;">Pronto</span>
<span class="t" style="left:140.80px;top:999.0px;height:17px;line-height:17px;font-size:13px;color:#2b2b2b;font-weight:700;letter-spacing:-0.169px;">Acessibilidade: investigar</span>
<span class="t" style="left:1401.50px;top:999.0px;height:17px;line-height:17px;font-size:13px;color:#3b3b3b;letter-spacing:-0.042px;">Exibir Configurações</span>
<span class="t" style="left:1876.50px;top:999.0px;height:17px;line-height:17px;font-size:13px;color:#3b3b3b;letter-spacing:-0.537px;">100%</span>
<svg class="b" style="left:18px;top:19px;" width="22" height="22" viewBox="0 0 22 22" fill="none">
<rect x="5" y="1" width="16" height="20" rx="1.4" fill="#185c37"/>
<path d="M5 2.4A1.4 1.4 0 0 1 6.4 1H13V6H5Z" fill="#21a366"/>
<path d="M13 1H19.6A1.4 1.4 0 0 1 21 2.4V6H13Z" fill="#33c481"/>
<rect x="5" y="6" width="8" height="5" fill="#107c41"/>
<rect x="13" y="6" width="8" height="5" fill="#21a366"/>
<rect x="5" y="11" width="8" height="5" fill="#185c37"/>
<rect x="13" y="11" width="8" height="5" fill="#107c41"/>
<rect x="2" y="6" width="13.4" height="12.4" rx="1.2" fill="#000" opacity=".2"/>
<rect x="1" y="5" width="13.4" height="12.4" rx="1.2" fill="#107c41"/>
<path d="M4.8 7.8L10.6 14.6M10.6 7.8L4.8 14.6" stroke="#fff" stroke-width="1.8"/>
</svg>
<div class="b" style="left:206px;top:17px;width:54px;height:25px;background:#fff;border:1px solid #5e5e5e;border-radius:13px"></div>
<div class="b" style="left:210px;top:21px;width:18px;height:18px;background:#5d5d5d;border-radius:50%"></div>
<svg class="b" style="left:274px;top:19px;" width="22" height="22" viewBox="0 0 22 22" fill="none">
<path d="M1.6 1.6H20.4V20.4H4.2L1.6 17.8Z" fill="#dba2dc" stroke="#9d2f9f" stroke-width="1.3" stroke-linejoin="miter"/>
<rect x="6" y="2.2" width="10" height="5" fill="#fff"/>
<path d="M5.6 1.6V7.6M16.4 1.6V7.6" stroke="#9d2f9f" stroke-width="1.2"/>
<rect x="7.3" y="14.8" width="7.4" height="5" fill="#fff"/>
<path d="M6.9 20.4V14.2H15.1V20.4" stroke="#9d2f9f" stroke-width="1.2" fill="none"/>
</svg>
<svg class="b" style="left:309px;top:18px;" width="22" height="23" viewBox="0 0 22 23" fill="none"><path d="M3 2.3V10.4H11.2" stroke="#a3a3a3" stroke-width="1.5" fill="none"/><path d="M3.2 10.2C5.5 5.2 9.5 2.4 13.4 2.6C17.2 2.8 19.6 5.6 19.6 9C19.6 11.6 18.4 13.2 16.6 15L9.6 21.8" stroke="#a3a3a3" stroke-width="1.5" fill="none" stroke-linecap="round"/></svg>
<svg class="b" style="left:336.3px;top:25.8px;" width="10.4" height="7.4" viewBox="0 0 10.4 7.4" fill="none"><path d="M2 2L5.2 5.4L8.4 2" stroke="#b9bdbb" stroke-width="1.2" stroke-linecap="round" stroke-linejoin="round"/></svg>
<svg class="b" style="left:357px;top:18px;" width="22" height="23" viewBox="0 0 22 23" fill="none"><g transform="translate(22,0) scale(-1,1)"><path d="M3 2.3V10.4H11.2" stroke="#a3a3a3" stroke-width="1.5" fill="none"/><path d="M3.2 10.2C5.5 5.2 9.5 2.4 13.4 2.6C17.2 2.8 19.6 5.6 19.6 9C19.6 11.6 18.4 13.2 16.6 15L9.6 21.8" stroke="#a3a3a3" stroke-width="1.5" fill="none" stroke-linecap="round"/></g></svg>
<svg class="b" style="left:384.3px;top:25.8px;" width="10.4" height="7.4" viewBox="0 0 10.4 7.4" fill="none"><path d="M2 2L5.2 5.4L8.4 2" stroke="#b9bdbb" stroke-width="1.2" stroke-linecap="round" stroke-linejoin="round"/></svg>
<svg class="b" style="left:401px;top:20px;" width="22" height="21" viewBox="0 0 22 21" fill="none">
<rect x="1.7" y="1.6" width="18.7" height="16.6" fill="#fff"/>
<rect x="8.5" y="6.5" width="11.5" height="11.5" fill="#2b88d8"/>
<path d="M1 1.6H20.4" stroke="#3b3b3b" stroke-width="1.6"/>
<path d="M1.7 1V18.6" stroke="#3b3b3b" stroke-width="1.6"/>
<path d="M1 6.5H20M1 12.3H20M8.4 1V18M14.3 1V18" stroke="#7a7a7a" stroke-width="1.2"/>
<path d="M20.4 1V6" stroke="#7a7a7a" stroke-width="1.2"/>
<path d="M8.4 12.3H14.3V6.5" stroke="#9cc7ee" stroke-width="1.2" fill="none"/>
<path d="M19.8 6.6L11.6 15.2" stroke="#fff" stroke-width="4.2" stroke-linecap="round"/>
<path d="M19.8 6.6L11.6 15.2" stroke="#3b3b3b" stroke-width="2.6" stroke-linecap="round"/>
<path d="M19.4 7L12.6 14.2" stroke="#e8e8e8" stroke-width="1" stroke-linecap="round"/>
<path d="M5.2 18.6C8 18.4 8.4 15.4 10.6 15.2C12.4 15.2 13 16.8 12.2 17.8C11 19.4 7.6 19.4 5.2 18.6Z" fill="#1e6fc0"/>
</svg>
<svg class="b" style="left:429.4px;top:25.95px;" width="10.2" height="7.3" viewBox="0 0 10.2 7.3" fill="none"><path d="M2 2L5.1 5.3L8.2 2" stroke="#2b2b2b" stroke-width="1.3" stroke-linecap="round" stroke-linejoin="round"/></svg>
<svg class="b" style="left:447px;top:20px;" width="22" height="21" viewBox="0 0 22 21" fill="none">
<rect x="1.7" y="1.6" width="18.7" height="16.6" fill="#fff"/>
<rect x="8.5" y="6.5" width="11.5" height="11.5" fill="#2b88d8"/>
<path d="M1 1.6H20.4" stroke="#3b3b3b" stroke-width="1.6"/>
<path d="M1.7 1V18.6" stroke="#3b3b3b" stroke-width="1.6"/>
<path d="M1 6.5H20M1 12.3H20M8.4 1V18M14.3 1V18" stroke="#7a7a7a" stroke-width="1.2"/>
<path d="M20.4 1V6" stroke="#7a7a7a" stroke-width="1.2"/>
<path d="M8.4 12.3H14.3V6.5" stroke="#9cc7ee" stroke-width="1.2" fill="none"/>
<path d="M19.8 6.6L11.6 15.2" stroke="#fff" stroke-width="4.2" stroke-linecap="round"/>
<path d="M19.8 6.6L11.6 15.2" stroke="#3b3b3b" stroke-width="2.6" stroke-linecap="round"/>
<path d="M19.4 7L12.6 14.2" stroke="#e8e8e8" stroke-width="1" stroke-linecap="round"/>
<path d="M5.2 18.6C8 18.4 8.4 15.4 10.6 15.2C12.4 15.2 13 16.8 12.2 17.8C11 19.4 7.6 19.4 5.2 18.6Z" fill="#1e6fc0"/>
</svg>
<svg class="b" style="left:475.4px;top:25.95px;" width="10.2" height="7.3" viewBox="0 0 10.2 7.3" fill="none"><path d="M2 2L5.1 5.3L8.2 2" stroke="#2b2b2b" stroke-width="1.3" stroke-linecap="round" stroke-linejoin="round"/></svg>
<svg class="b" style="left:501px;top:24px;" width="14" height="13" viewBox="0 0 14 13" fill="none"><path d="M2.2 3.3H11.2" stroke="#3b3b3b" stroke-width="1.2"/><path d="M3.6 7.4L6.7 10.4L9.8 7.4" stroke="#3b3b3b" stroke-width="1.3" fill="none"/></svg>
<svg class="b" style="left:919.75px;top:25.5px;" width="14.5" height="9" viewBox="0 0 14.5 9" fill="none"><path d="M2 2L7.25 7L12.5 2" stroke="#2b2b2b" stroke-width="1.3" stroke-linecap="round" stroke-linejoin="round"/></svg>
<svg class="b" style="left:975px;top:18px;" width="22" height="24" viewBox="0 0 22 24" fill="none"><circle cx="14" cy="9.4" r="5.6" stroke="#5a5a5a" stroke-width="1.3"/><path d="M10 13.6L3.6 20.4" stroke="#5a5a5a" stroke-width="1.3" stroke-linecap="round"/></svg>
<svg class="b" style="left:1693px;top:14px;" width="32" height="32" viewBox="0 0 32 32" fill="none">
<defs><clipPath id="av"><circle cx="16" cy="15.8" r="14.5"/></clipPath>
<filter id="avb" x="-10%" y="-10%" width="120%" height="120%"><feGaussianBlur stdDeviation="0.45"/></filter></defs>
<g clip-path="url(#av)"><g filter="url(#avb)">
<rect width="32" height="32" fill="#d9d3ca"/>
<rect x="0" y="0" width="32" height="5" fill="#e9e6df"/>
<rect x="16" y="11" width="16" height="6" fill="#e4e1dc"/>
<rect x="17.9" y="5" width="3.9" height="5.8" fill="#2c3444"/>
<rect x="18.8" y="6" width="2.1" height="4" fill="#b39a62"/>
<rect x="25.7" y="6.6" width="2" height="3.2" fill="#3a3a3a"/>
<rect x="11.4" y="9.6" width="5.2" height="7.4" rx="2" fill="#3b2a22"/>
<path d="M1 32V19C2.4 16.6 4.6 15.8 7 15.8H12C15.4 15.8 18 17.4 19.6 20.4V32Z" fill="#16161a"/>
<path d="M7.4 17.6H13L12.8 27H8.6Z" fill="#ddd0e4"/>
<rect x="20" y="15.7" width="8.8" height="11.4" fill="#151515"/>
<rect x="21" y="16.8" width="6.8" height="9.2" fill="#2a2927"/>
<ellipse cx="24.4" cy="20.8" rx="1.8" ry="1.7" fill="#c9a21e"/>
<rect x="22.6" y="23.8" width="3.6" height="0.9" fill="#8c8574"/>
<ellipse cx="9.1" cy="12.6" rx="3.4" ry="4.1" fill="#a8765a"/>
<path d="M5.7 11.2C5.5 8 7 6.6 9.2 6.6C11.4 6.6 12.6 8 12.5 11.2C11.8 9.6 10.6 9.2 9.1 9.2C7.6 9.2 6.4 9.6 5.7 11.2Z" fill="#1b1512"/>
<path d="M5.9 13.6C6.2 16.2 7.6 17.2 9.1 17.2C10.6 17.2 12 16.2 12.3 13.6C11.4 15 10.4 15.2 9.1 15.2C7.8 15.2 6.8 15 5.9 13.6Z" fill="#2c1e18"/>
<ellipse cx="8.6" cy="26.4" rx="3.2" ry="1.5" fill="#b98a6c"/>
<rect x="0" y="27.2" width="32" height="5" fill="#6b4c33"/>
</g></g>
<circle cx="16" cy="15.8" r="14.6" stroke="#e0242a" stroke-width="1" fill="none"/>
</svg>
<svg class="b" style="left:1760px;top:22px;" width="18" height="16" viewBox="0 0 18 16" fill="none"><path d="M3 7.2H15.4" stroke="#1f1f1f" stroke-width="1.2"/></svg>
<svg class="b" style="left:1820px;top:21px;" width="18" height="18" viewBox="0 0 18 18" fill="none"><rect x="2.8" y="5.2" width="9.8" height="9.8" rx="2" stroke="#1f1f1f" stroke-width="1.2"/><path d="M5.4 2.9H11.4A3.6 3.6 0 0 1 15 6.5V12.4" stroke="#1f1f1f" stroke-width="1.2" fill="none"/></svg>
<svg class="b" style="left:1880px;top:21px;" width="18" height="18" viewBox="0 0 18 18" fill="none"><path d="M2.9 2.9L15.1 15.1M15.1 2.9L2.9 15.1" stroke="#1f1f1f" stroke-width="1.2"/></svg>
<svg class="b" style="left:1576px;top:70px;" width="18" height="17" viewBox="0 0 18 17" fill="none"><path d="M3.2 3.2H14.4A0.8 0.8 0 0 1 15.2 4V10.6A0.8 0.8 0 0 1 14.4 11.4H7.6L4.4 14.6V11.4H3.2A0.8 0.8 0 0 1 2.4 10.6V4A0.8 0.8 0 0 1 3.2 3.2Z" stroke="#2b2b2b" stroke-width="1.3" fill="none" stroke-linejoin="round"/></svg>
<svg class="b" style="left:1717px;top:70px;" width="18" height="18" viewBox="0 0 18 18" fill="none"><path d="M6.4 6.4H2.6V15.4H13.4V12.2" stroke="#fff" stroke-width="1.3" fill="none"/><path d="M10.4 2.2L15.6 6.6L10.4 11V8.4C7.4 8.4 5.6 9.6 4.6 11.8C4.8 8 7 5.2 10.4 4.8Z" stroke="#fff" stroke-width="1.3" fill="none" stroke-linejoin="round"/></svg>
<svg class="b" style="left:1890.2px;top:75.7px;" width="10.6" height="7.6" viewBox="0 0 10.6 7.6" fill="none"><path d="M2 2L5.3 5.6L8.6 2" stroke="#fff" stroke-width="1.5" stroke-linecap="round" stroke-linejoin="round"/></svg>
<svg class="b" style="left:36px;top:105px;" width="40" height="44" viewBox="0 0 40 44" fill="none">
<rect x="4" y="9" width="25" height="29" fill="#f7f7f7" stroke="#e98a1c" stroke-width="2"/>
<rect x="5.7" y="10.7" width="21.6" height="25.6" fill="none" stroke="#fde2a6" stroke-width="1.4"/>
<path d="M8.6 13.2V8.2H12.4C12.4 5.4 14 3.6 16.4 3.6C18.8 3.6 20.4 5.4 20.4 8.2H24.2V13.2Z" fill="#f3f3f3" stroke="#7f7f7f" stroke-width="1.4" stroke-linejoin="round"/>
<rect x="20.4" y="19" width="16" height="21" fill="#f6f6f6" stroke="#555" stroke-width="1.6"/>
</svg>
<svg class="b" style="left:47.2px;top:175.8px;" width="10.2" height="7.4" viewBox="0 0 10.2 7.4" fill="none"><path d="M2 2L5.1 5.4L8.2 2" stroke="#2b2b2b" stroke-width="1.25" stroke-linecap="round" stroke-linejoin="round"/></svg>
<svg class="b" style="left:87px;top:105px;" width="18" height="24" viewBox="0 0 18 24" fill="none">
<path d="M5 2.4L11.6 17.4M13.4 2.4L6.8 17.4" stroke="#444" stroke-width="1.3" stroke-linecap="round"/>
<circle cx="5.3" cy="19.4" r="2.1" stroke="#2b88d8" stroke-width="1.4" fill="#fff"/>
<circle cx="13" cy="19.4" r="2.1" stroke="#2b88d8" stroke-width="1.4" fill="#fff"/>
</svg>
<svg class="b" style="left:84px;top:137px;" width="24" height="24" viewBox="0 0 24 24" fill="none">
<path d="M10.4 19.4H2.8V2.8H9.4L11.2 4.4" stroke="#4a4a4a" stroke-width="1.3" fill="#fafafa" stroke-linejoin="round"/>
<path d="M10.6 6.4H17.4L21.4 10.4V21.2H10.6Z" stroke="#4a4a4a" stroke-width="1.3" fill="#fafafa" stroke-linejoin="round"/>
<path d="M17.2 6.6V10.6H21.2" stroke="#4a4a4a" stroke-width="1.1" fill="none"/>
<path d="M13.2 14.2H18.8M13.2 16.4H18.8M13.2 18.6H18.8" stroke="#6a6a6a" stroke-width="1"/>
</svg>
<svg class="b" style="left:120.3px;top:145.5px;" width="10.2" height="7.4" viewBox="0 0 10.2 7.4" fill="none"><path d="M2 2L5.1 5.4L8.2 2" stroke="#2b2b2b" stroke-width="1.25" stroke-linecap="round" stroke-linejoin="round"/></svg>
<svg class="b" style="left:84px;top:169px;" width="24" height="22" viewBox="0 0 24 22" fill="none">
<path d="M3 10.2L12.2 5.4L17 13.2L10.8 19.6Z" fill="#fff" stroke="#e07a12" stroke-width="1.5" stroke-linejoin="round"/>
<path d="M5.4 13.2L9.4 12.2L12.6 15.6L10.8 19.2Z" fill="#fbd58e"/>
<path d="M3 10.2L10.8 19.6" stroke="#e07a12" stroke-width="1.6"/>
<path d="M11.2 6.6L14.4 3.9L19.2 10.6L16.4 12.6Z" fill="#fff" stroke="#444" stroke-width="1.3" stroke-linejoin="round"/>
<path d="M15.4 5.4L19.2 2.4L21 4.8L17.2 8Z" fill="#fff" stroke="#444" stroke-width="1.3" stroke-linejoin="round"/>
</svg>
<svg class="b" style="left:140px;top:205px;" width="11" height="11" viewBox="0 0 11 11" fill="none"><path d="M0.6 8.6V0.6H8.7" stroke="#2b2b2b" stroke-width="1.1" fill="none"/><path d="M3.9 4L9.2 9.2M9.4 4.2V9.4H3.6" stroke="#2b2b2b" stroke-width="1.1" fill="none"/></svg>
<div class="b" style="left:154.5px;top:104px;width:1px;height:111px;background:#d1d1d1"></div>
<div class="b" style="left:165px;top:112px;width:143px;height:30px;background:#fff;border:1px solid #8f8f8f;border-radius:5px"></div>
<div class="b" style="left:310px;top:112px;width:63px;height:30px;background:#fff;border:1px solid #8f8f8f;border-radius:5px"></div>
<span class="t" style="left:168.00px;top:118.0px;height:20px;line-height:20px;font-size:15px;color:#242424;letter-spacing:0.095px;">Aptos Narrow</span>
<span class="t" style="left:314.00px;top:118.0px;height:20px;line-height:20px;font-size:15px;color:#242424;letter-spacing:-0.642px;">10</span>
<svg class="b" style="left:294.9px;top:124.1px;" width="10.2" height="7.4" viewBox="0 0 10.2 7.4" fill="none"><path d="M2 2L5.1 5.4L8.2 2" stroke="#2b2b2b" stroke-width="1.25" stroke-linecap="round" stroke-linejoin="round"/></svg>
<svg class="b" style="left:359.9px;top:124.1px;" width="10.2" height="7.4" viewBox="0 0 10.2 7.4" fill="none"><path d="M2 2L5.1 5.4L8.2 2" stroke="#2b2b2b" stroke-width="1.25" stroke-linecap="round" stroke-linejoin="round"/></svg>
<span class="t" style="left:380.50px;top:114.0px;height:26px;line-height:26px;font-size:22.5px;color:#3b3b3b;">A</span>
<svg class="b" style="left:392px;top:116px;" width="10" height="8" viewBox="0 0 10 8" fill="none"><path d="M2.4 5.6L5 2.8L7.6 5.6" stroke="#2b88d8" stroke-width="1.5" fill="none"/></svg>
<span class="t" style="left:414.76px;top:117.0px;height:22px;line-height:22px;font-size:17.5px;color:#3b3b3b;">A</span>
<svg class="b" style="left:423.8px;top:116px;" width="10" height="8" viewBox="0 0 10 8" fill="none"><path d="M2.4 2.6L5 5.4L7.6 2.6" stroke="#2b88d8" stroke-width="1.5" fill="none"/></svg>
<span class="t" style="left:172.98px;top:155.0px;height:22px;line-height:22px;font-size:17.5px;color:#2b2b2b;font-weight:700;">N</span>
<span class="t" style="left:208.94px;top:154.0px;height:24px;line-height:24px;font-size:19px;color:#2b2b2b;font-style:italic;font-family:'Liberation Serif',serif;">I</span>
<span class="t" style="left:238.13px;top:156.0px;height:22px;line-height:22px;font-size:17px;color:#2b2b2b;">S</span>
<div class="b" style="left:239.2px;top:173px;width:9.8px;height:1.7px;background:#3b3b3b"></div>
<svg class="b" style="left:262.3px;top:163.7px;" width="10.2" height="7.4" viewBox="0 0 10.2 7.4" fill="none"><path d="M2 2L5.1 5.4L8.2 2" stroke="#2b2b2b" stroke-width="1.25" stroke-linecap="round" stroke-linejoin="round"/></svg>
<div class="b" style="left:280px;top:152px;width:1px;height:29px;background:#d1d1d1"></div>
<svg class="b" style="left:286px;top:156px;" width="22" height="22" viewBox="0 0 22 22" fill="none">
<path d="M2 2.4H20M2 11H20M2.6 2V19M11 2V19M19.6 2V19" stroke="#555" stroke-width="1.1" stroke-dasharray="1.6 1.5"/>
<path d="M1.6 19.4H20.4" stroke="#333" stroke-width="1.8"/>
</svg>
<svg class="b" style="left:316.3px;top:163.7px;" width="10.2" height="7.4" viewBox="0 0 10.2 7.4" fill="none"><path d="M2 2L5.1 5.4L8.2 2" stroke="#2b2b2b" stroke-width="1.25" stroke-linecap="round" stroke-linejoin="round"/></svg>
<div class="b" style="left:334px;top:152px;width:1px;height:29px;background:#d1d1d1"></div>
<svg class="b" style="left:340px;top:155px;" width="24" height="24" viewBox="0 0 24 24" fill="none">
<path d="M9.2 4.2L16.4 11.4L10.6 16.6L4.4 10.4Z" fill="#fff" stroke="#444" stroke-width="1.3" stroke-linejoin="round"/>
<path d="M9.8 2.2V7" stroke="#444" stroke-width="1.2"/>
<path d="M16 8.4C18.4 9.4 19.4 12 18.8 15.2C17.6 13.4 16.4 12.6 15.4 12.2Z" fill="#2b78c8"/>
<rect x="1.6" y="17" width="20.2" height="5" fill="#ffed00"/>
</svg>
<svg class="b" style="left:370.2px;top:163.7px;" width="10.2" height="7.4" viewBox="0 0 10.2 7.4" fill="none"><path d="M2 2L5.1 5.4L8.2 2" stroke="#2b2b2b" stroke-width="1.25" stroke-linecap="round" stroke-linejoin="round"/></svg>
<span class="t" style="left:397.50px;top:154.0px;height:22px;line-height:22px;font-size:18px;color:#3b3b3b;">A</span>
<div class="b" style="left:393px;top:172px;width:19.6px;height:5px;background:#f01020"></div>
<svg class="b" style="left:421.3px;top:163.7px;" width="10.2" height="7.4" viewBox="0 0 10.2 7.4" fill="none"><path d="M2 2L5.1 5.4L8.2 2" stroke="#2b2b2b" stroke-width="1.25" stroke-linecap="round" stroke-linejoin="round"/></svg>
<svg class="b" style="left:432px;top:205px;" width="11" height="11" viewBox="0 0 11 11" fill="none"><path d="M0.6 8.6V0.6H8.7" stroke="#2b2b2b" stroke-width="1.1" fill="none"/><path d="M3.9 4L9.2 9.2M9.4 4.2V9.4H3.6" stroke="#2b2b2b" stroke-width="1.1" fill="none"/></svg>
<div class="b" style="left:446.2px;top:104px;width:1px;height:111px;background:#d1d1d1"></div>
<svg class="b" style="left:462px;top:115px;" width="21" height="16" viewBox="0 0 21 16" fill="none"><path d="M1.0 2.8H19.0M4.0 7.9H16.6M1.0 13.0H19.0" stroke="#4a4a4a" stroke-width="1.3"/></svg>
<div class="b" style="left:489px;top:112px;width:30px;height:30px;background:#ebebeb;border:1px solid #7d7d7d;border-radius:6px"></div>
<svg class="b" style="left:494px;top:119px;" width="20" height="15" viewBox="0 0 20 15" fill="none"><path d="M1.0 2.3H18.8M4.2 7.4H15.9M1.0 12.4H18.8" stroke="#4a4a4a" stroke-width="1.3"/></svg>
<svg class="b" style="left:526px;top:124px;" width="21" height="15" viewBox="0 0 21 15" fill="none"><path d="M1.1 2.0H19.0M4.3 7.2H16.5M1.1 12.2H19.0" stroke="#4a4a4a" stroke-width="1.3"/></svg>
<svg class="b" style="left:555px;top:112px;" width="26" height="27" viewBox="0 0 26 27" fill="none">
<text x="0" y="0" transform="translate(5.4,17.4) rotate(-52)" font-family="Liberation Sans, sans-serif" font-size="14" fill="#3b3b3b">ab</text>
<path d="M9.6 23.6L22.2 10.4" stroke="#2b88d8" stroke-width="1.4"/>
<path d="M16.6 10H22.6V16" stroke="#2b88d8" stroke-width="1.4" fill="none"/>
</svg>
<svg class="b" style="left:584.2px;top:124.1px;" width="10.2" height="7.4" viewBox="0 0 10.2 7.4" fill="none"><path d="M2 2L5.1 5.4L8.2 2" stroke="#2b2b2b" stroke-width="1.25" stroke-linecap="round" stroke-linejoin="round"/></svg>
<div class="b" style="left:622.3px;top:111px;width:1px;height:78px;background:#d1d1d1"></div>
<div class="b" style="left:630px;top:112px;width:30px;height:30px;background:#ebebeb;border:1px solid #7d7d7d;border-radius:6px"></div>
<svg class="b" style="left:632px;top:114px;" width="26" height="26" viewBox="0 0 26 26" fill="none">
<text x="4.6" y="12.4" font-family="Liberation Sans, sans-serif" font-size="12.5" fill="#3b3b3b">ab</text>
<text x="4.8" y="21.8" font-family="Liberation Sans, sans-serif" font-size="12.5" fill="#3b3b3b">c</text>
<path d="M22.4 13.6C22.8 17 20.6 18.6 17.6 18.6H13.6" stroke="#2b88d8" stroke-width="1.4" fill="none"/>
<path d="M17 15L13.2 18.6L17 22.2" stroke="#2b88d8" stroke-width="1.4" fill="none"/>
</svg>
<svg class="b" style="left:462px;top:157px;" width="21" height="20" viewBox="0 0 21 20" fill="none"><path d="M1.0 2.0H19.0M1.0 7.0H13.4M1.0 11.9H19.0M1.0 17.0H13.4" stroke="#4a4a4a" stroke-width="1.3"/></svg>
<div class="b" style="left:489px;top:152px;width:30px;height:30px;background:#ebebeb;border:1px solid #7d7d7d;border-radius:6px"></div>
<svg class="b" style="left:494px;top:157px;" width="20" height="20" viewBox="0 0 20 20" fill="none"><path d="M1.0 2.0H18.8M4.2 7.0H15.9M1.0 11.9H18.8M4.2 17.0H15.9" stroke="#4a4a4a" stroke-width="1.3"/></svg>
<svg class="b" style="left:526px;top:157px;" width="21" height="20" viewBox="0 0 21 20" fill="none"><path d="M1.1 2.0H19.0M6.2 7.0H19.0M1.1 11.9H19.0M6.2 17.0H19.0" stroke="#4a4a4a" stroke-width="1.3"/></svg>
<svg class="b" style="left:558px;top:157px;" width="21" height="20" viewBox="0 0 21 20" fill="none"><path d="M1.0 2.0H19.0M13.0 7.0H19.0M13.0 11.9H19.0M1.0 17.0H19.0" stroke="#4a4a4a" stroke-width="1.3"/></svg>
<svg class="b" style="left:557px;top:161px;" width="12" height="11" viewBox="0 0 12 11" fill="none"><path d="M2.4 5.5H10M5.6 2.2L2.4 5.5L5.6 8.8" stroke="#2b88d8" stroke-width="1.4" fill="none"/></svg>
<svg class="b" style="left:590px;top:157px;" width="20" height="20" viewBox="0 0 20 20" fill="none"><path d="M1.0 2.0H18.8M12.8 7.0H18.8M12.8 11.9H18.8M1.0 17.0H18.8" stroke="#4a4a4a" stroke-width="1.3"/></svg>
<svg class="b" style="left:589px;top:161px;" width="12" height="11" viewBox="0 0 12 11" fill="none"><path d="M2 5.5H9.6M6.4 2.2L9.6 5.5L6.4 8.8" stroke="#2b88d8" stroke-width="1.4" fill="none"/></svg>
<svg class="b" style="left:634px;top:156px;" width="21" height="21" viewBox="0 0 21 21" fill="none">
<rect x="1.2" y="1.2" width="18.4" height="18.4" fill="#f0f0f0" stroke="#b5b5b5" stroke-width="1.2"/>
<rect x="1.8" y="5" width="17.2" height="10.6" fill="#e2e2e2"/>
<path d="M1.2 5H19.6M1.2 15.6H19.6M10.4 1.2V5M10.4 15.6V19.6" stroke="#b5b5b5" stroke-width="1.1"/>
<path d="M4 10.3H16.8M6.6 7.6L3.8 10.3L6.6 13M14.2 7.6L17 10.3L14.2 13" stroke="#b5b5b5" stroke-width="1.1" fill="none"/>
</svg>
<svg class="b" style="left:669.0px;top:164.0px;" width="10.6" height="7.6" viewBox="0 0 10.6 7.6" fill="none"><path d="M2 2L5.3 5.6L8.6 2" stroke="#b9b9b9" stroke-width="1.3" stroke-linecap="round" stroke-linejoin="round"/></svg>
<svg class="b" style="left:685px;top:205px;" width="11" height="11" viewBox="0 0 11 11" fill="none"><path d="M0.6 8.6V0.6H8.7" stroke="#2b2b2b" stroke-width="1.1" fill="none"/><path d="M3.9 4L9.2 9.2M9.4 4.2V9.4H3.6" stroke="#2b2b2b" stroke-width="1.1" fill="none"/></svg>
<div class="b" style="left:699px;top:104px;width:1px;height:111px;background:#d1d1d1"></div>
<div class="b" style="left:710px;top:112px;width:180px;height:30px;background:#fff;border:1px solid #8f8f8f;border-radius:5px"></div>
<span class="t" style="left:713.40px;top:118.0px;height:20px;line-height:20px;font-size:15px;color:#242424;letter-spacing:-0.536px;">Geral</span>
<svg class="b" style="left:877.2px;top:124.1px;" width="10.2" height="7.4" viewBox="0 0 10.2 7.4" fill="none"><path d="M2 2L5.1 5.4L8.2 2" stroke="#2b2b2b" stroke-width="1.25" stroke-linecap="round" stroke-linejoin="round"/></svg>
<svg class="b" style="left:713px;top:158px;" width="24" height="20" viewBox="0 0 24 20" fill="none">
<rect x="2.2" y="4" width="18.4" height="9.6" fill="#f4f4f4" stroke="#444" stroke-width="1.1"/>
<path d="M1.8 2.8H21.2M1.8 14.9H13" stroke="#444" stroke-width="1.3"/>
<circle cx="11.4" cy="8.8" r="2.6" stroke="#444" stroke-width="1.1" fill="none"/>
<path d="M6.4 6.4H5V11.2H6.4M16.4 6.4H17.8V8" stroke="#444" stroke-width="1" fill="none"/>
<path d="M12.4 9.6V16.4C12.4 17.6 14.4 18.6 17 18.6C19.6 18.6 21.6 17.6 21.6 16.4V9.6" fill="#fff" stroke="#e07a12" stroke-width="1.3"/>
<ellipse cx="17" cy="9.6" rx="4.6" ry="1.9" fill="#fff" stroke="#e07a12" stroke-width="1.3"/>
<path d="M12.4 12C12.4 13.2 14.4 14.2 17 14.2C19.6 14.2 21.6 13.2 21.6 12M12.4 14.4C12.4 15.6 14.4 16.6 17 16.6C19.6 16.6 21.6 15.6 21.6 14.4" stroke="#e07a12" stroke-width="1.2" fill="none"/>
</svg>
<svg class="b" style="left:743.2px;top:164.1px;" width="10.2" height="7.4" viewBox="0 0 10.2 7.4" fill="none"><path d="M2 2L5.1 5.4L8.2 2" stroke="#2b2b2b" stroke-width="1.25" stroke-linecap="round" stroke-linejoin="round"/></svg>
<span class="t" style="left:765.33px;top:154.0px;height:26px;line-height:26px;font-size:24px;color:#3b3b3b;transform:scaleX(.9);transform-origin:0 0;">%</span>
<span class="t" style="left:798.00px;top:158.6px;height:16px;line-height:16px;font-size:12px;color:#666;letter-spacing:-0.207px;">000</span>
<div class="b" style="left:825.5px;top:153px;width:1px;height:28px;background:#d1d1d1"></div>
<svg class="b" style="left:832px;top:155px;" width="22" height="23" viewBox="0 0 22 23" fill="none">
<path d="M1.6 7.4H12.2M5.2 3.6L1.6 7.4L5.2 11.2" stroke="#2b88d8" stroke-width="1.4" fill="none"/>
<text x="11.2" y="10" font-family="Liberation Sans, sans-serif" font-size="11" fill="#3b3b3b" textLength="9" lengthAdjust="spacingAndGlyphs">,0</text>
<text x="5" y="20.4" font-family="Liberation Sans, sans-serif" font-size="11" fill="#3b3b3b" textLength="15" lengthAdjust="spacingAndGlyphs">,00</text>
</svg>
<svg class="b" style="left:863px;top:155px;" width="23" height="23" viewBox="0 0 23 23" fill="none">
<text x="5.6" y="10" font-family="Liberation Sans, sans-serif" font-size="11" fill="#3b3b3b" textLength="15" lengthAdjust="spacingAndGlyphs">,00</text>
<path d="M2.4 16.4H12.6M9 12.6L12.6 16.4L9 20.2" stroke="#2b88d8" stroke-width="1.4" fill="none"/>
<text x="11.8" y="20.4" font-family="Liberation Sans, sans-serif" font-size="11" fill="#3b3b3b" textLength="9" lengthAdjust="spacingAndGlyphs">,0</text>
</svg>
<svg class="b" style="left:885px;top:205px;" width="11" height="11" viewBox="0 0 11 11" fill="none"><path d="M0.6 8.6V0.6H8.7" stroke="#2b2b2b" stroke-width="1.1" fill="none"/><path d="M3.9 4L9.2 9.2M9.4 4.2V9.4H3.6" stroke="#2b2b2b" stroke-width="1.1" fill="none"/></svg>
<div class="b" style="left:899px;top:104px;width:1px;height:111px;background:#d1d1d1"></div>
<svg class="b" style="left:914px;top:107px;" width="22" height="20" viewBox="0 0 22 20" fill="none">
<rect x="1.6" y="1.4" width="19" height="17.2" fill="#fff" stroke="#4f4f4f" stroke-width="1.3"/>
<path d="M5.2 1.4V18.6M12.2 1.4V18.6M17 1.4V18.6M1.6 7.2H20.6M1.6 12.8H20.6" stroke="#9a9a9a" stroke-width="1"/>
<rect x="5.4" y="1.6" width="6.6" height="5" fill="#ff9ea0" stroke="#e2272b" stroke-width="1.2"/>
<rect x="5.6" y="7.8" width="3.4" height="4.4" fill="#5ea2e2" stroke="#2b78c8" stroke-width="1"/>
<rect x="5.4" y="13.4" width="9.2" height="5" fill="#ff9ea0" stroke="#e2272b" stroke-width="1.2"/>
</svg>
<svg class="b" style="left:1105.6px;top:112.7px;" width="10.2" height="7.4" viewBox="0 0 10.2 7.4" fill="none"><path d="M2 2L5.1 5.4L8.2 2" stroke="#2b2b2b" stroke-width="1.25" stroke-linecap="round" stroke-linejoin="round"/></svg>
<svg class="b" style="left:914px;top:139px;" width="22" height="21" viewBox="0 0 22 21" fill="none">
<rect x="7.6" y="5.6" width="13.2" height="13.2" fill="#2b88d8"/>
<rect x="9" y="7" width="8" height="8" fill="#8fc0ee"/>
<path d="M1 1.8H20.6" stroke="#4f4f4f" stroke-width="1.5"/>
<path d="M1.8 1.2V19" stroke="#4f4f4f" stroke-width="1.5"/>
<path d="M20.4 1.4V5.6" stroke="#4f4f4f" stroke-width="1.3"/>
<path d="M1.8 6.2H20M1.8 12H8M7.6 1.8V12M13.6 1.8V6" stroke="#9a9a9a" stroke-width="1.1"/>
<path d="M20.2 6.4L11.4 15.4" stroke="#fff" stroke-width="4.4" stroke-linecap="round"/>
<path d="M20.2 6.4L11.4 15.4" stroke="#3b3b3b" stroke-width="2.7" stroke-linecap="round"/>
<path d="M19.7 6.9L12.6 14.2" stroke="#ededed" stroke-width="1" stroke-linecap="round"/>
<path d="M4.6 19C7.6 18.8 8 15.8 10.2 15.4C12.2 15.4 12.8 17 12 18.2C10.8 19.8 7.2 19.8 4.6 19Z" fill="#1e6fc0"/>
</svg>
<svg class="b" style="left:1092.4px;top:144.7px;" width="10.2" height="7.4" viewBox="0 0 10.2 7.4" fill="none"><path d="M2 2L5.1 5.4L8.2 2" stroke="#2b2b2b" stroke-width="1.25" stroke-linecap="round" stroke-linejoin="round"/></svg>
<svg class="b" style="left:914px;top:171px;" width="22" height="21" viewBox="0 0 22 21" fill="none">
<rect x="1.6" y="1.8" width="19" height="17" fill="#fff" stroke="#4f4f4f" stroke-width="1.3"/>
<path d="M1.6 5.6H20.6M1.6 15.6H20.6M5 1.8V18.8M18 1.8V18.8" stroke="#9a9a9a" stroke-width="1"/>
<rect x="5" y="5.4" width="13" height="10" fill="#8fc0ee" stroke="#2b78c8" stroke-width="1.3"/>
<path d="M20.2 6.4L11.4 15.4" stroke="#fff" stroke-width="4.4" stroke-linecap="round"/>
<path d="M20.2 6.4L11.4 15.4" stroke="#3b3b3b" stroke-width="2.7" stroke-linecap="round"/>
<path d="M19.7 6.9L12.6 14.2" stroke="#ededed" stroke-width="1" stroke-linecap="round"/>
<path d="M4 19.2C7 19 7.6 16 9.8 15.6C11.8 15.6 12.4 17.2 11.6 18.4C10.4 20 6.6 20 4 19.2Z" fill="#1e6fc0"/>
</svg>
<svg class="b" style="left:1050.9px;top:176.7px;" width="10.2" height="7.4" viewBox="0 0 10.2 7.4" fill="none"><path d="M2 2L5.1 5.4L8.2 2" stroke="#2b2b2b" stroke-width="1.25" stroke-linecap="round" stroke-linejoin="round"/></svg>
<div class="b" style="left:1137px;top:104px;width:1px;height:111px;background:#d1d1d1"></div>
<svg class="b" style="left:1152px;top:107px;" width="22" height="20" viewBox="0 0 22 20" fill="none">
<rect x="1.6" y="1.6" width="19" height="16.8" fill="#fff" stroke="#4f4f4f" stroke-width="1.3"/>
<path d="M7.4 1.6V18.4M14 1.6V18.4M1.6 7H20.6M1.6 13H20.6" stroke="#9a9a9a" stroke-width="1"/>
<rect x="10" y="6.4" width="11" height="7" fill="#2b78c8"/>
<rect x="11.2" y="7.6" width="3.4" height="4.6" fill="#8fc0ee"/><rect x="16" y="7.6" width="4" height="4.6" fill="#8fc0ee"/>
<path d="M1.4 9.8H10" stroke="#fff" stroke-width="3.6"/>
<path d="M1.8 9.8H12.6M5.6 6L1.8 9.8L5.6 13.6" stroke="#2b88d8" stroke-width="1.4" fill="none"/>
</svg>
<svg class="b" style="left:1239.3px;top:113.7px;" width="10.2" height="7.4" viewBox="0 0 10.2 7.4" fill="none"><path d="M2 2L5.1 5.4L8.2 2" stroke="#2b2b2b" stroke-width="1.25" stroke-linecap="round" stroke-linejoin="round"/></svg>
<svg class="b" style="left:1152px;top:139px;" width="22" height="20" viewBox="0 0 22 20" fill="none">
<path d="M1.6 1.8H20.6M1.6 18H20.6" stroke="#4f4f4f" stroke-width="1.3"/>
<path d="M1.6 1.8V6.4M1.6 13.4V18M20.6 1.8V6.4M20.6 13.4V18" stroke="#4f4f4f" stroke-width="1.3"/>
<path d="M7.4 1.8V6.4M14 1.8V6.4M7.4 13.4V18M14 13.4V18M1.6 6.4H20.6M1.6 13.4H20.6" stroke="#9a9a9a" stroke-width="1"/>
<path d="M1 10H5" stroke="#2b78c8" stroke-width="1.3"/>
<rect x="5" y="7" width="6.8" height="6" fill="#8fc0ee" stroke="#2b78c8" stroke-width="1.4"/>
<path d="M14.6 7L20.4 13M20.4 7L14.6 13" stroke="#e81123" stroke-width="1.4"/>
</svg>
<svg class="b" style="left:1242.2px;top:145.7px;" width="10.2" height="7.4" viewBox="0 0 10.2 7.4" fill="none"><path d="M2 2L5.1 5.4L8.2 2" stroke="#2b2b2b" stroke-width="1.25" stroke-linecap="round" stroke-linejoin="round"/></svg>
<svg class="b" style="left:1152px;top:169px;" width="22" height="23" viewBox="0 0 22 23" fill="none">
<path d="M5.2 2.8H17.8M5.2 0.8V4.8M17.8 0.8V4.8" stroke="#2b88d8" stroke-width="1.3"/>
<rect x="1.6" y="5" width="19" height="16.6" fill="#fff" stroke="#4f4f4f" stroke-width="1.3"/>
<path d="M7 5V21.6M16 5V21.6M1.6 9.6H20.6M1.6 17.2H20.6" stroke="#9a9a9a" stroke-width="1"/>
<rect x="7" y="9.8" width="9" height="7.2" fill="#8fc0ee" stroke="#2b78c8" stroke-width="1.4"/>
</svg>
<svg class="b" style="left:1241.4px;top:176.9px;" width="10.2" height="7.4" viewBox="0 0 10.2 7.4" fill="none"><path d="M2 2L5.1 5.4L8.2 2" stroke="#2b2b2b" stroke-width="1.25" stroke-linecap="round" stroke-linejoin="round"/></svg>
<div class="b" style="left:1273.3px;top:104px;width:1px;height:111px;background:#d1d1d1"></div>
<svg class="b" style="left:1289px;top:106px;" width="20" height="22" viewBox="0 0 20 22" fill="none"><path d="M17.6 6V3H3L10.6 11L3 19H17.6V16" stroke="#3b3b3b" stroke-width="1.4" fill="none" stroke-linejoin="miter"/></svg>
<svg class="b" style="left:1323.3px;top:113.7px;" width="10.2" height="7.4" viewBox="0 0 10.2 7.4" fill="none"><path d="M2 2L5.1 5.4L8.2 2" stroke="#2b2b2b" stroke-width="1.25" stroke-linecap="round" stroke-linejoin="round"/></svg>
<svg class="b" style="left:1288px;top:139px;" width="22" height="20" viewBox="0 0 22 20" fill="none">
<rect x="1.8" y="1.8" width="18.6" height="16.4" fill="#f8f8f8" stroke="#4a4a4a" stroke-width="1.4"/>
<path d="M1.8 4.4H20.4" stroke="#4a4a4a" stroke-width="1.2"/>
<path d="M11 6.6V15.4M7.4 11.8L11 15.6L14.6 11.8" stroke="#2b88d8" stroke-width="1.4" fill="none"/>
</svg>
<svg class="b" style="left:1315.2px;top:145.7px;" width="10.2" height="7.4" viewBox="0 0 10.2 7.4" fill="none"><path d="M2 2L5.1 5.4L8.2 2" stroke="#2b2b2b" stroke-width="1.25" stroke-linecap="round" stroke-linejoin="round"/></svg>
<svg class="b" style="left:1287px;top:170px;" width="23" height="22" viewBox="0 0 23 22" fill="none">
<path d="M3 13.4L14.6 2.2L21 8.4L9.2 20Z" fill="#fafafa" stroke="#9b2d9b" stroke-width="1.5" stroke-linejoin="round"/>
<path d="M3 13.4L7.2 9.2L13.6 15.6L9.2 20Z" fill="#d9a0da" stroke="#9b2d9b" stroke-width="1.3" stroke-linejoin="round"/>
</svg>
<svg class="b" style="left:1315.2px;top:177.7px;" width="10.2" height="7.4" viewBox="0 0 10.2 7.4" fill="none"><path d="M2 2L5.1 5.4L8.2 2" stroke="#2b2b2b" stroke-width="1.25" stroke-linecap="round" stroke-linejoin="round"/></svg>
<span class="t" style="left:1364.13px;top:106.6px;height:22px;line-height:22px;font-size:20px;color:#2b88d8;">A</span>
<span class="t" style="left:1364.04px;top:124.6px;height:22px;line-height:22px;font-size:20px;color:#3b3b3b;">Z</span>
<svg class="b" style="left:1378px;top:115px;" width="24" height="24" viewBox="0 0 24 24" fill="none"><path d="M2.2 2.6H21.4V5L13.6 14.6V21.6H9.6V14.6L2.2 5Z" fill="#f6f6f6" stroke="#555" stroke-width="1.3" stroke-linejoin="round"/></svg>
<svg class="b" style="left:1403.4px;top:173.95px;" width="10" height="7.3" viewBox="0 0 10 7.3" fill="none"><path d="M2 2L5.0 5.3L8 2" stroke="#2b2b2b" stroke-width="1.25" stroke-linecap="round" stroke-linejoin="round"/></svg>
<svg class="b" style="left:1443px;top:106px;" width="40" height="40" viewBox="0 0 40 40" fill="none"><circle cx="25.2" cy="15.4" r="12.6" fill="#f9f9f9" stroke="#444" stroke-width="1.3"/><path d="M16.2 25.2L2.8 38" stroke="#444" stroke-width="1.4" stroke-linecap="round"/></svg>
<svg class="b" style="left:1495.8px;top:173.95px;" width="10" height="7.3" viewBox="0 0 10 7.3" fill="none"><path d="M2 2L5.0 5.3L8 2" stroke="#2b2b2b" stroke-width="1.25" stroke-linecap="round" stroke-linejoin="round"/></svg>
<div class="b" style="left:1518.4px;top:104px;width:1px;height:111px;background:#d1d1d1"></div>
<svg class="b" style="left:1556px;top:107px;" width="38" height="38" viewBox="0 0 38 38" fill="none">
<rect x="2.2" y="2.2" width="34" height="33.6" stroke="#d6532b" stroke-width="1.8" fill="#fff"/>
<rect x="6" y="6" width="11" height="11" stroke="#d6532b" stroke-width="1.5"/>
<rect x="21.2" y="6" width="11.4" height="11" stroke="#d6532b" stroke-width="1.5"/>
<rect x="6" y="21.2" width="11" height="11" stroke="#d6532b" stroke-width="1.5"/>
<rect x="21.2" y="21.2" width="11.4" height="11" stroke="#d6532b" stroke-width="1.5"/>
</svg>
<div class="b" style="left:1630.6px;top:104px;width:1px;height:111px;background:#d1d1d1"></div>
<svg class="b" style="left:1648px;top:107px;" width="40" height="38" viewBox="0 0 40 38" fill="none">
<defs>
<linearGradient id="cpA" x1="0.55" y1="0" x2="0.4" y2="1"><stop offset="0" stop-color="#2bb4f6"/><stop offset=".28" stop-color="#1a98e4"/><stop offset=".58" stop-color="#52ae6a"/><stop offset=".86" stop-color="#cfc31c"/><stop offset="1" stop-color="#facc10"/></linearGradient>
<linearGradient id="cpB" x1="0.7" y1="0" x2="0.35" y2="1"><stop offset="0" stop-color="#a552f4"/><stop offset=".25" stop-color="#c050d0"/><stop offset=".55" stop-color="#ee5690"/><stop offset="1" stop-color="#fda24c"/></linearGradient>
<linearGradient id="cpC" x1="0.3" y1="0" x2="0.7" y2="1"><stop offset="0" stop-color="#0b36c4"/><stop offset="1" stop-color="#1c7ae8"/></linearGradient>
<linearGradient id="cpD" x1="0" y1="0" x2="0.9" y2="1"><stop offset="0" stop-color="#ff8c3e"/><stop offset="1" stop-color="#de3626"/></linearGradient>
</defs>
<path d="M21.6 3.4C22.6 2.4 24 2.1 25.8 2.1C27.4 2.1 28.4 3 29 4.8L29.8 7.6C30.2 9.2 30.8 10.4 31.8 11.4H25C22.8 11.4 21.2 11.8 19.6 12.8Z" fill="url(#cpC)"/>
<path d="M11 2.1H25.4C23.2 2.5 22 3.6 21.2 5.8L15.4 24C15 25.2 14.4 25.9 13 25.9H5.2C2.6 25.9 1.2 23.8 1.8 21.2L6 6.5C6.9 3.6 8.6 2.1 11 2.1Z" fill="url(#cpA)"/>
<path d="M9.9 26H20.6L18 35.6H15.8C13.6 35.6 12.6 34.4 12 32.6L11 29C10.8 28 10.4 27 9.9 26Z" fill="url(#cpD)"/>
<path d="M26.6 11.5H35C37.6 11.5 38.7 13.4 38.1 15.6L34.2 31C33.4 34 31.6 35.6 29 35.6H16.6C17.6 35.2 18.2 34.4 18.6 33L24.2 14.4C24.8 12.4 25.4 11.5 26.6 11.5Z" fill="url(#cpB)"/>
</svg>
<div class="b" style="left:1705.4px;top:104px;width:1px;height:111px;background:#d1d1d1"></div>
<svg class="b" style="left:1733px;top:108px;" width="36" height="40" viewBox="0 0 36 40" fill="none">
<path d="M15.4 29.6H6.6C4.8 29.6 3.6 28.4 3.6 26.6V6.6C3.6 4.8 4.8 3.6 6.6 3.6H19.6L26 10V19" stroke="#2f6fe4" stroke-width="1.5" fill="none" stroke-linejoin="round"/>
<path d="M8.4 22.4C7.2 21.6 8.6 20 11.2 18.8C12.6 16.2 13.6 13.4 13.9 11.2C14.1 9.4 15.4 9.6 15.4 11.2C15.4 13.6 16.4 16 18.2 17.6C20.4 17.5 22.4 18 22.2 19.2C22 20.2 20 19.8 18.2 17.8C16 18 13.6 18.6 11.4 19.4C10.2 21.4 9.2 22.8 8.4 22.4Z" stroke="#2f6fe4" stroke-width="1" fill="none" stroke-linejoin="round"/>
<g transform="rotate(-40 25.4 29)" stroke="#2f6fe4" stroke-width="1.6" fill="none">
<rect x="15.4" y="25.6" width="11" height="6.8" rx="3.4"/>
<rect x="23.6" y="25.6" width="11" height="6.8" rx="3.4"/>
</g>
</svg>
<div class="b" style="left:1788.2px;top:104px;width:1px;height:111px;background:#d1d1d1"></div>
<div class="b" style="left:1810px;top:106px;width:40px;height:40px;background:#323232;border-radius:50%"></div>
<span class="t" style="left:1815.60px;top:115.8px;height:16px;line-height:16px;font-size:13.5px;color:#fff;font-weight:700;letter-spacing:0.349px;">GPT</span>
<span class="t" style="left:1822.00px;top:129.6px;height:6px;line-height:6px;font-size:3.6px;color:#b5b5b5;letter-spacing:-0.541px;">— EXCEL —</span>
<div class="b" style="left:1871.6px;top:104px;width:1px;height:111px;background:#d1d1d1"></div>
<svg class="b" style="left:1883.5px;top:200.3px;" width="15" height="9.4" viewBox="0 0 15 9.4" fill="none"><path d="M2 2L7.5 7.4L13 2" stroke="#2b2b2b" stroke-width="1.4" stroke-linecap="round" stroke-linejoin="round"/></svg>
<svg class="b" style="left:155.6px;top:244.5px;" width="15.6" height="9.4" viewBox="0 0 15.6 9.4" fill="none"><path d="M2 2L7.8 7.4L13.6 2" stroke="#2b2b2b" stroke-width="1.3" stroke-linecap="round" stroke-linejoin="round"/></svg>
<div class="b" style="left:188.2px;top:241.20000000000002px;width:2.4px;height:2.4px;background:#3b3b3b"></div>
<div class="b" style="left:188.2px;top:246.4px;width:2.4px;height:2.4px;background:#3b3b3b"></div>
<div class="b" style="left:188.2px;top:251.60000000000002px;width:2.4px;height:2.4px;background:#3b3b3b"></div>
<svg class="b" style="left:208px;top:237px;" width="20" height="20" viewBox="0 0 20 20" fill="none"><path d="M3 3L17 17M17 3L3 17" stroke="#a6a6a6" stroke-width="1.2"/></svg>
<svg class="b" style="left:236px;top:237px;" width="24" height="20" viewBox="0 0 24 20" fill="none"><path d="M2.2 9.6L8.8 16L22 2.6" stroke="#a6a6a6" stroke-width="1.2" fill="none"/></svg>
<span class="t" style="left:269.40px;top:234.4px;height:24px;line-height:24px;font-size:21px;color:#333;font-style:italic;font-family:'Liberation Serif',serif;letter-spacing:1.222px;-webkit-text-stroke:0.4px #333;">fx</span>
<svg class="b" style="left:292.2px;top:243.4px;" width="15.2" height="9.2" viewBox="0 0 15.2 9.2" fill="none"><path d="M2 2L7.6 7.2L13.2 2" stroke="#a6a6a6" stroke-width="1.2" stroke-linecap="round" stroke-linejoin="round"/></svg>
<svg class="b" style="left:1889.4px;top:241.3px;" width="15.8" height="9.4" viewBox="0 0 15.8 9.4" fill="none"><path d="M2 2L7.9 7.4L13.8 2" stroke="#2b2b2b" stroke-width="1.3" stroke-linecap="round" stroke-linejoin="round"/></svg>
<div class="b" style="left:1896px;top:270px;width:21.2px;height:685px;background:#f5f5f5;border-radius:10.6px"></div>
<svg class="b" style="left:1898.5px;top:274px;" width="16" height="12" viewBox="0 0 16 12" fill="none"><path d="M8 2.8L13 9.6H3Z" fill="#717171" stroke="#717171" stroke-width="1.6" stroke-linejoin="round"/></svg>
<div class="b" style="left:1901px;top:912px;width:11.2px;height:21.2px;background:#717171;border-radius:5.6px"></div>
<svg class="b" style="left:1898.5px;top:938.5px;" width="16" height="12" viewBox="0 0 16 12" fill="none"><path d="M8 9.8L13 2.6H3Z" fill="#717171" stroke="#717171" stroke-width="1.6" stroke-linejoin="round"/></svg>
<div class="b" style="left:1175px;top:962px;width:717.5px;height:21px;background:#f5f5f5;border-radius:10.5px"></div>
<svg class="b" style="left:1179px;top:965px;" width="12" height="15" viewBox="0 0 12 15" fill="none"><path d="M2 7.4L10 2V13Z" fill="#717171" stroke="#717171" stroke-width="1" stroke-linejoin="round"/></svg>
<div class="b" style="left:1196px;top:967px;width:452px;height:11.5px;background:#717171;border-radius:6px"></div>
<svg class="b" style="left:1877px;top:965px;" width="12" height="15" viewBox="0 0 12 15" fill="none"><path d="M10 7.4L2 2V13Z" fill="#717171" stroke="#717171" stroke-width="1" stroke-linejoin="round"/></svg>
<div class="b" style="left:1153.9px;top:966.9px;width:2.2px;height:2.2px;background:#2b2b2b"></div>
<div class="b" style="left:1153.9px;top:972.4px;width:2.2px;height:2.2px;background:#2b2b2b"></div>
<div class="b" style="left:1153.9px;top:977.9px;width:2.2px;height:2.2px;background:#2b2b2b"></div>
<svg class="b" style="left:29px;top:964px;" width="12" height="16" viewBox="0 0 12 16" fill="none"><path d="M9 2.4L2.6 8L9 13.6" stroke="#9e9e9e" stroke-width="1.3" fill="none"/></svg>
<svg class="b" style="left:69px;top:964px;" width="12" height="16" viewBox="0 0 12 16" fill="none"><path d="M3 2.4L9.4 8L3 13.6" stroke="#9e9e9e" stroke-width="1.3" fill="none"/></svg>
<svg class="b" style="left:895px;top:964px;" width="17" height="17" viewBox="0 0 17 17" fill="none"><path d="M8.4 1.8V15M1.8 8.4H15" stroke="#2b2b2b" stroke-width="1.3"/></svg>
<svg class="b" style="left:77px;top:998px;" width="21" height="18" viewBox="0 0 21 18" fill="none">
<rect x="1.6" y="2" width="17" height="14" stroke="#3b3b3b" stroke-width="1.2" fill="none"/>
<path d="M1.6 4.6H18.6" stroke="#3b3b3b" stroke-width="1.2"/>
<path d="M4 8H7.4M4 10.8H6.6M4 13.4H6.4" stroke="#3b3b3b" stroke-width="1"/>
<circle cx="13.2" cy="11.6" r="5" fill="#f3f3f3" stroke="#3b3b3b" stroke-width="1.2"/>
<circle cx="13.2" cy="11.6" r="2.3" fill="#3b3b3b"/>
</svg>
<svg class="b" style="left:117px;top:997px;" width="21" height="20" viewBox="0 0 21 20" fill="none">
<circle cx="8.2" cy="3.4" r="1.9" stroke="#3b3b3b" stroke-width="1.1" fill="none"/>
<path d="M1.6 5.4L6 7.2H10.4L14.8 5.4L15.4 6.8L11 9V12L13 17.4L11.6 18L8.2 13L4.8 18L3.4 17.4L5.4 12V9L1 6.8Z" stroke="#3b3b3b" stroke-width="1.1" fill="none" stroke-linejoin="round"/>
<path d="M11.6 11.4L18.6 18.4M18.6 11.4L11.6 18.4" stroke="#f3f3f3" stroke-width="3"/>
<path d="M11.6 11.4L18.6 18.4M18.6 11.4L11.6 18.4" stroke="#3b3b3b" stroke-width="1.2"/>
</svg>
<svg class="b" style="left:1379px;top:999px;" width="20" height="18" viewBox="0 0 20 18" fill="none">
<path d="M9 12.4H1.8V1.6H18V6" stroke="#3b3b3b" stroke-width="1.2" fill="none"/>
<circle cx="13.6" cy="11.6" r="3.2" stroke="#3b3b3b" stroke-width="1.2" fill="#f3f3f3"/>
<path d="M13.6 6.4V8.2M13.6 15V16.8M8.4 11.6H10.2M17 11.6H18.8M9.9 7.9L11.2 9.2M16 14L17.3 15.3M17.3 7.9L16 9.2M11.2 14L9.9 15.3" stroke="#3b3b3b" stroke-width="1.4"/>
<circle cx="13.6" cy="11.6" r="1.2" fill="#3b3b3b"/>
</svg>
<div class="b" style="left:1546px;top:994px;width:50px;height:24px;background:#dcdcdc"></div>
<svg class="b" style="left:1561px;top:997px;" width="19" height="18" viewBox="0 0 19 18" fill="none"><path d="M2 2.2H17.6V16.4H2ZM2 7H17.6M2 11.7H17.6M7.2 2.2V16.4M12.4 2.2V16.4" stroke="#3b3b3b" stroke-width="1.5" fill="none"/></svg>
<svg class="b" style="left:1611px;top:997px;" width="20" height="18" viewBox="0 0 20 18" fill="none"><rect x="1.8" y="2" width="16.6" height="14.6" stroke="#3b3b3b" stroke-width="1.4"/><rect x="5.6" y="4.6" width="9" height="9.6" stroke="#3b3b3b" stroke-width="1.1"/><path d="M7.4 7.4H12.8M7.4 9.4H12.8M7.4 11.4H12.8" stroke="#3b3b3b" stroke-width="1"/></svg>
<svg class="b" style="left:1661px;top:997px;" width="20" height="18" viewBox="0 0 20 18" fill="none"><rect x="1.8" y="2" width="16.6" height="14.6" stroke="#3b3b3b" stroke-width="1.4"/><path d="M1.8 9.8H11.4V2M6.6 2V9.8" stroke="#3b3b3b" stroke-width="1.3" fill="none"/></svg>
<div class="b" style="left:1703.5px;top:1006px;width:9.5px;height:1.2px;background:#3b3b3b"></div>
<div class="b" style="left:1720px;top:1006px;width:124px;height:1px;background:#717171"></div>
<div class="b" style="left:1780px;top:1000px;width:5.4px;height:13.6px;background:#5a5a5a"></div>
<div class="b" style="left:1850px;top:1006px;width:10px;height:1.2px;background:#3b3b3b"></div>
<div class="b" style="left:1854.4px;top:1001.6px;width:1.2px;height:10px;background:#3b3b3b"></div>
</div>
</body></html>
